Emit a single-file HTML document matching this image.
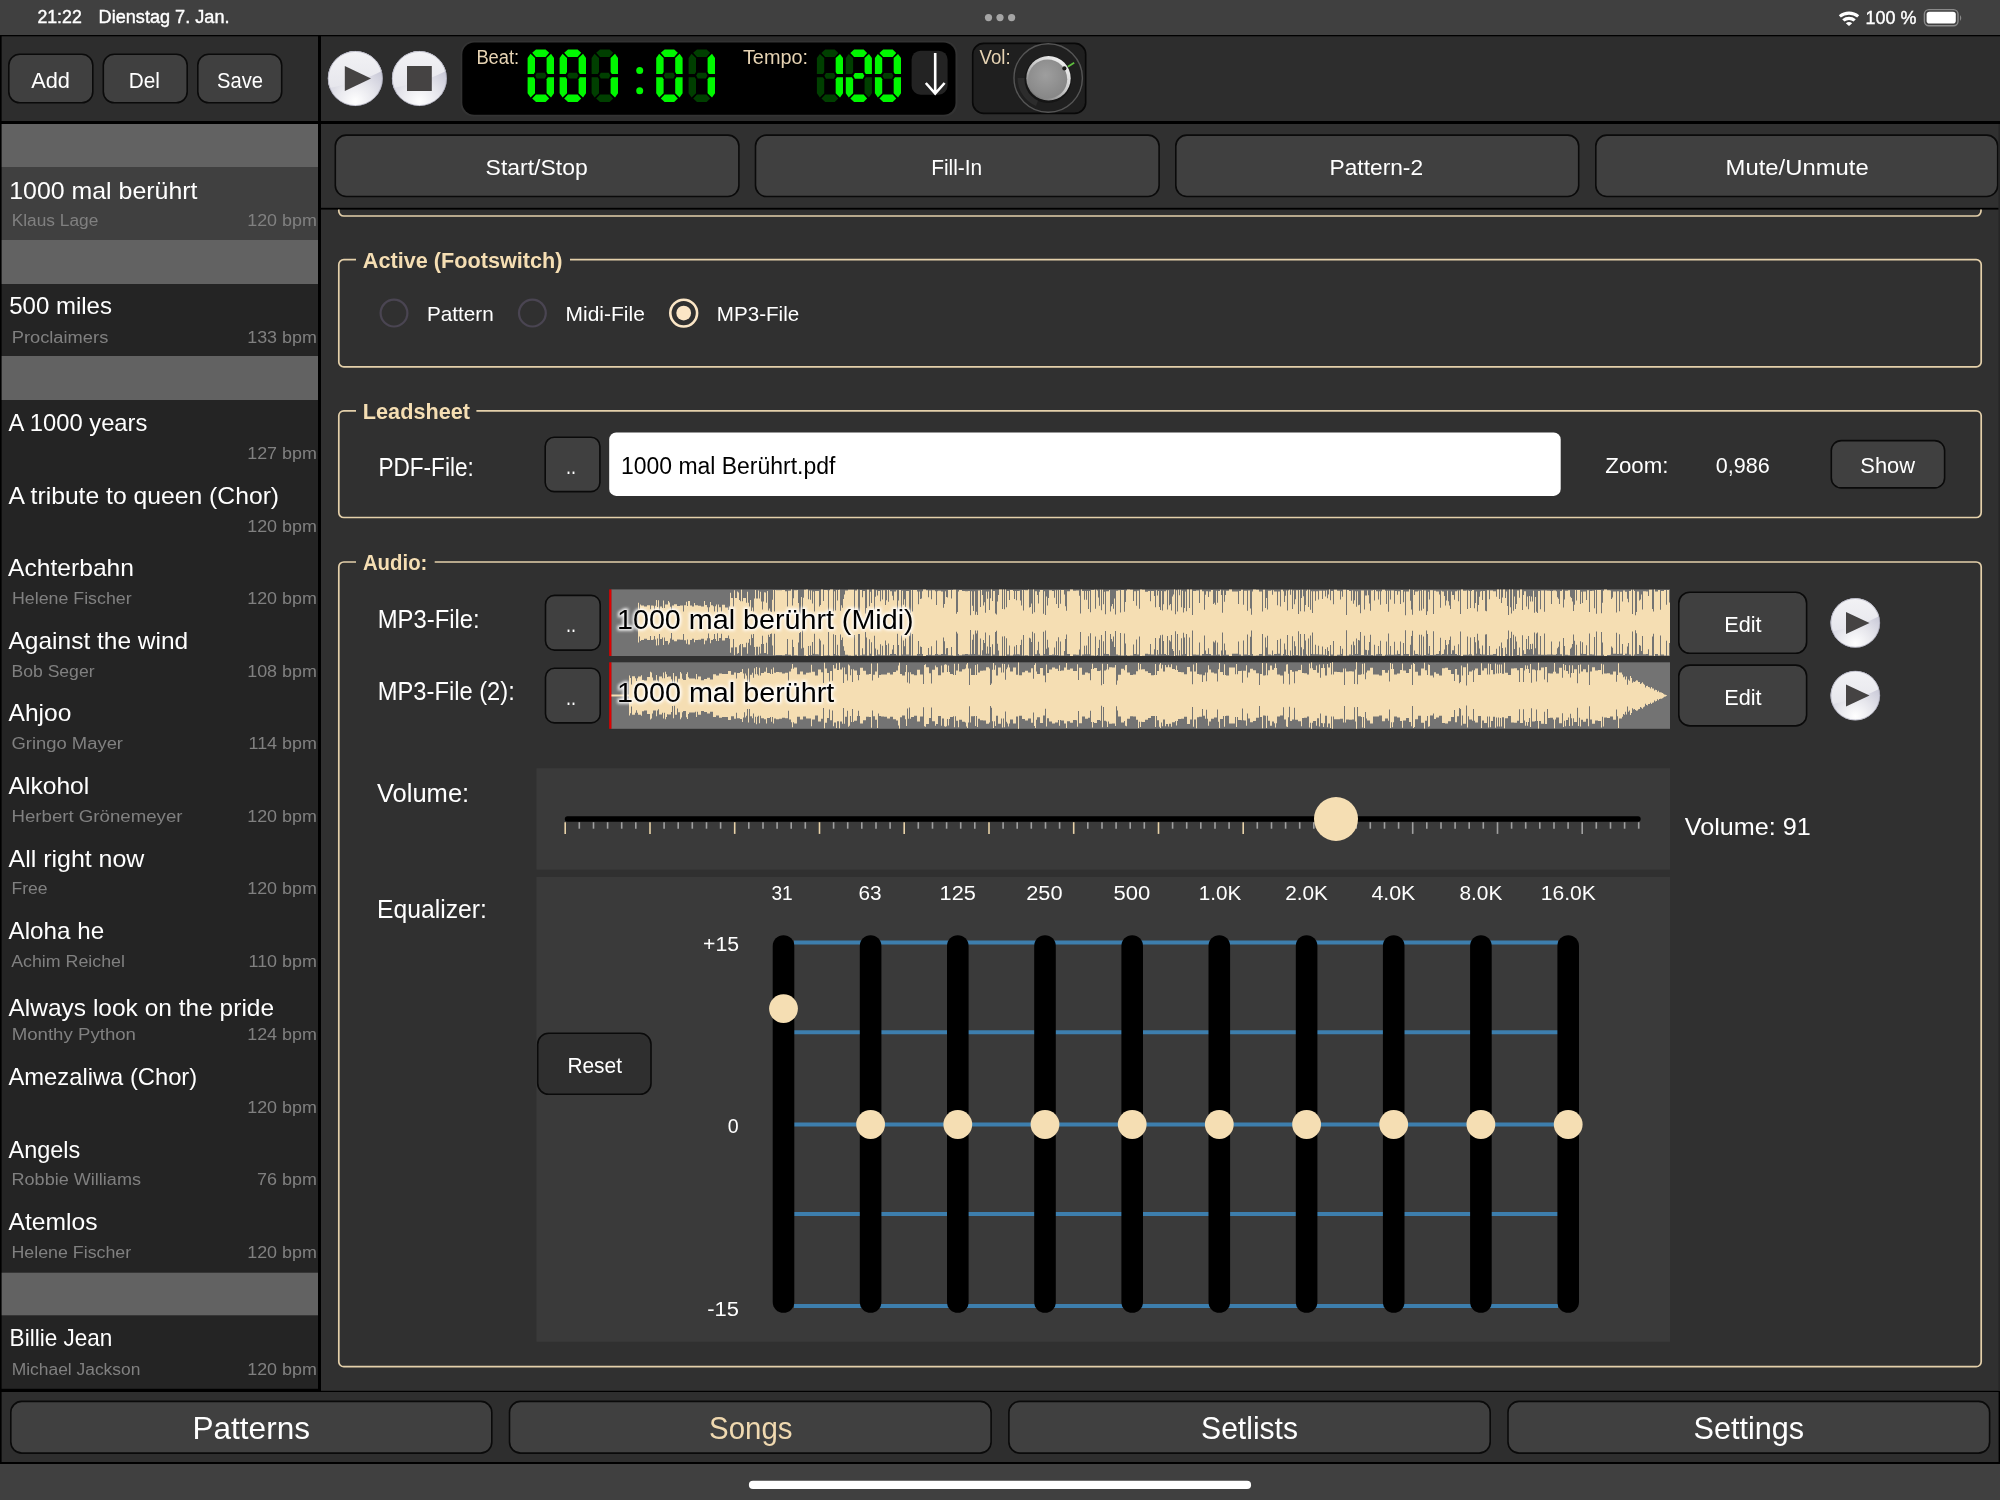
<!DOCTYPE html>
<html><head><meta charset="utf-8"><title>Songs</title>
<style>html,body{margin:0;padding:0;background:#303030;width:2000px;height:1500px;overflow:hidden}
svg{display:block;font-family:"Liberation Sans", sans-serif;opacity:0.999}</style></head>
<body><svg width="2000" height="1500" viewBox="0 0 2000 1500">
<defs>
<radialGradient id="gball" cx="50%" cy="92%" r="80%"><stop offset="0" stop-color="#ffffff"/><stop offset="0.45" stop-color="#e6e6ec"/><stop offset="0.8" stop-color="#cfcfdc"/><stop offset="1" stop-color="#c4c4d2"/></radialGradient>
<linearGradient id="gtop" x1="0" y1="0" x2="0" y2="1"><stop offset="0" stop-color="#f2f2f5"/><stop offset="1" stop-color="#e6e6ec"/></linearGradient>
<radialGradient id="gknob" cx="50%" cy="50%" r="50%" fx="45%" fy="45%"><stop offset="0" stop-color="#9c9c9c"/><stop offset="0.72" stop-color="#8a8a8a"/><stop offset="0.86" stop-color="#d6d6d6"/><stop offset="0.96" stop-color="#a0a0a0"/><stop offset="1" stop-color="#555"/></radialGradient>
<filter id="glow" x="-10%" y="-30%" width="120%" height="160%"><feGaussianBlur stdDeviation="1.6"/></filter>
<linearGradient id="grim" x1="0.85" y1="0.1" x2="0.2" y2="0.9"><stop offset="0" stop-color="#f0f0f0"/><stop offset="0.5" stop-color="#c8c8c8"/><stop offset="1" stop-color="#7a7a7a"/></linearGradient>
<radialGradient id="gface" cx="45%" cy="40%" r="65%"><stop offset="0" stop-color="#9e9e9e"/><stop offset="1" stop-color="#858585"/></radialGradient>
</defs>
<rect x="0.00" y="0.00" width="2000.00" height="35.00" fill="#404040"/>
<rect x="0.00" y="35.00" width="2000.00" height="1.60" fill="#000"/>
<rect x="0.00" y="36.50" width="2000.00" height="84.50" fill="#2d2d2d"/>
<rect x="0.00" y="121.00" width="2000.00" height="3.00" fill="#000"/>
<rect x="0.00" y="124.00" width="318.00" height="1267.00" fill="#242424"/>
<rect x="321.00" y="124.00" width="1679.00" height="1267.00" fill="#303030"/>
<rect x="318.00" y="36.00" width="3.00" height="1355.00" fill="#000"/>
<rect x="0.00" y="1392.00" width="2000.00" height="70.00" fill="#2e2e2e"/>
<rect x="0.00" y="1462.00" width="2000.00" height="2.20" fill="#000"/>
<rect x="0.00" y="1464.00" width="2000.00" height="36.00" fill="#404040"/>
<rect x="321.00" y="124.00" width="1679.00" height="84.00" fill="#303030"/>
<rect x="321.00" y="207.80" width="1679.00" height="1.80" fill="#000"/>
<text x="37.4" y="23.4" font-size="18" fill="#fff" textLength="44.4" lengthAdjust="spacingAndGlyphs" stroke="#fff" stroke-width="0.4">21:22</text>
<text x="98.6" y="23.4" font-size="18" fill="#fff" textLength="130.9" lengthAdjust="spacingAndGlyphs" stroke="#fff" stroke-width="0.4">Dienstag 7. Jan.</text>
<circle cx="988.50" cy="17.60" r="3.60" fill="#a5a5a5"/>
<circle cx="1000.00" cy="17.60" r="3.60" fill="#a5a5a5"/>
<circle cx="1011.60" cy="17.60" r="3.60" fill="#a5a5a5"/>
<g fill="#fff"><path d="M1838.8,15.2 A16,16 0 0 1 1859.2,15.2 L1857.2,17.6 A13,13 0 0 0 1840.8,17.6 Z"/><path d="M1842.2,19.2 A11,11 0 0 1 1855.8,19.2 L1853.6,21.6 A8,8 0 0 0 1844.4,21.6 Z"/><path d="M1845.8,23.2 A5.5,5.5 0 0 1 1852.2,23.2 L1849,26 Z"/></g>
<text x="1865.6" y="23.6" font-size="17.5" fill="#fff" textLength="50.8" lengthAdjust="spacingAndGlyphs" stroke="#fff" stroke-width="0.4">100 %</text>
<rect x="1924.40" y="9.60" width="33.60" height="16.20" fill="none" rx="4.5" stroke="#8a8a8a" stroke-width="1.4"/>
<rect x="1926.60" y="11.80" width="29.20" height="11.80" fill="#fff" rx="2.8"/>
<path d="M1960,15 Q1962.5,18 1960,21 Z" fill="#8a8a8a"/>
<rect x="8.80" y="54.30" width="84.00" height="48.50" fill="#404040" rx="11" stroke="#0a0a0a" stroke-width="1.6"/>
<text x="31.2" y="87.5" font-size="22.5" fill="#fff" textLength="38.8" lengthAdjust="spacingAndGlyphs">Add</text>
<rect x="103.30" y="54.30" width="83.90" height="48.50" fill="#404040" rx="11" stroke="#0a0a0a" stroke-width="1.6"/>
<text x="128.8" y="87.5" font-size="22.5" fill="#fff" textLength="31.2" lengthAdjust="spacingAndGlyphs">Del</text>
<rect x="197.80" y="54.30" width="83.90" height="48.50" fill="#404040" rx="11" stroke="#0a0a0a" stroke-width="1.6"/>
<text x="217.0" y="87.5" font-size="22.5" fill="#fff" textLength="46.0" lengthAdjust="spacingAndGlyphs">Save</text>
<rect x="0.00" y="124.00" width="318.00" height="43.00" fill="#626262"/>
<rect x="0.00" y="167.00" width="318.00" height="73.00" fill="#404040"/>
<rect x="0.00" y="240.00" width="318.00" height="44.00" fill="#626262"/>
<rect x="0.00" y="356.00" width="318.00" height="44.00" fill="#626262"/>
<rect x="0.00" y="1272.70" width="318.00" height="42.60" fill="#626262"/>
<text x="9.2" y="198.8" font-size="23.2" fill="#fff" textLength="188.3" lengthAdjust="spacingAndGlyphs">1000 mal berührt</text>
<text x="11.7" y="226.2" font-size="17.3" fill="#808080" textLength="86.6" lengthAdjust="spacingAndGlyphs">Klaus Lage</text>
<text x="247.2" y="226.2" font-size="17.3" fill="#808080" textLength="69.7" lengthAdjust="spacingAndGlyphs">120 bpm</text>
<text x="9.2" y="313.8" font-size="23.2" fill="#fff" textLength="102.8" lengthAdjust="spacingAndGlyphs">500 miles</text>
<text x="11.7" y="342.5" font-size="17.3" fill="#808080" textLength="96.6" lengthAdjust="spacingAndGlyphs">Proclaimers</text>
<text x="247.2" y="342.5" font-size="17.3" fill="#808080" textLength="69.7" lengthAdjust="spacingAndGlyphs">133 bpm</text>
<text x="8.6" y="431.0" font-size="23.2" fill="#fff" textLength="138.8" lengthAdjust="spacingAndGlyphs">A 1000 years</text>
<text x="247.2" y="459.0" font-size="17.3" fill="#808080" textLength="69.7" lengthAdjust="spacingAndGlyphs">127 bpm</text>
<text x="8.6" y="503.7" font-size="23.2" fill="#fff" textLength="270.5" lengthAdjust="spacingAndGlyphs">A tribute to queen (Chor)</text>
<text x="247.2" y="531.5" font-size="17.3" fill="#808080" textLength="69.7" lengthAdjust="spacingAndGlyphs">120 bpm</text>
<text x="8.0" y="576.0" font-size="23.2" fill="#fff" textLength="126.0" lengthAdjust="spacingAndGlyphs">Achterbahn</text>
<text x="12.0" y="604.0" font-size="17.3" fill="#808080" textLength="119.6" lengthAdjust="spacingAndGlyphs">Helene Fischer</text>
<text x="247.2" y="604.0" font-size="17.3" fill="#808080" textLength="69.7" lengthAdjust="spacingAndGlyphs">120 bpm</text>
<text x="8.5" y="648.5" font-size="23.2" fill="#fff" textLength="179.7" lengthAdjust="spacingAndGlyphs">Against the wind</text>
<text x="11.5" y="676.7" font-size="17.3" fill="#808080" textLength="83.0" lengthAdjust="spacingAndGlyphs">Bob Seger</text>
<text x="247.2" y="676.7" font-size="17.3" fill="#808080" textLength="69.7" lengthAdjust="spacingAndGlyphs">108 bpm</text>
<text x="8.5" y="721.2" font-size="23.2" fill="#fff" textLength="62.8" lengthAdjust="spacingAndGlyphs">Ahjoo</text>
<text x="11.5" y="748.6" font-size="17.3" fill="#808080" textLength="111.5" lengthAdjust="spacingAndGlyphs">Gringo Mayer</text>
<text x="248.5" y="748.6" font-size="17.3" fill="#808080" textLength="68.4" lengthAdjust="spacingAndGlyphs">114 bpm</text>
<text x="8.5" y="793.8" font-size="23.2" fill="#fff" textLength="80.8" lengthAdjust="spacingAndGlyphs">Alkohol</text>
<text x="11.5" y="822.0" font-size="17.3" fill="#808080" textLength="171.0" lengthAdjust="spacingAndGlyphs">Herbert Grönemeyer</text>
<text x="247.2" y="822.0" font-size="17.3" fill="#808080" textLength="69.7" lengthAdjust="spacingAndGlyphs">120 bpm</text>
<text x="8.5" y="866.6" font-size="23.2" fill="#fff" textLength="135.9" lengthAdjust="spacingAndGlyphs">All right now</text>
<text x="11.5" y="894.2" font-size="17.3" fill="#808080" textLength="36.1" lengthAdjust="spacingAndGlyphs">Free</text>
<text x="247.2" y="894.2" font-size="17.3" fill="#808080" textLength="69.7" lengthAdjust="spacingAndGlyphs">120 bpm</text>
<text x="8.5" y="939.2" font-size="23.2" fill="#fff" textLength="95.7" lengthAdjust="spacingAndGlyphs">Aloha he</text>
<text x="11.2" y="967.1" font-size="17.3" fill="#808080" textLength="113.7" lengthAdjust="spacingAndGlyphs">Achim Reichel</text>
<text x="248.5" y="967.1" font-size="17.3" fill="#808080" textLength="68.4" lengthAdjust="spacingAndGlyphs">110 bpm</text>
<text x="8.5" y="1015.5" font-size="23.2" fill="#fff" textLength="265.6" lengthAdjust="spacingAndGlyphs">Always look on the pride</text>
<text x="11.7" y="1039.5" font-size="17.3" fill="#808080" textLength="124.3" lengthAdjust="spacingAndGlyphs">Monthy Python</text>
<text x="247.2" y="1039.5" font-size="17.3" fill="#808080" textLength="69.7" lengthAdjust="spacingAndGlyphs">124 bpm</text>
<text x="8.5" y="1085.0" font-size="23.2" fill="#fff" textLength="188.7" lengthAdjust="spacingAndGlyphs">Amezaliwa (Chor)</text>
<text x="247.2" y="1112.7" font-size="17.3" fill="#808080" textLength="69.7" lengthAdjust="spacingAndGlyphs">120 bpm</text>
<text x="8.5" y="1157.7" font-size="23.2" fill="#fff" textLength="71.8" lengthAdjust="spacingAndGlyphs">Angels</text>
<text x="11.5" y="1185.4" font-size="17.3" fill="#808080" textLength="129.5" lengthAdjust="spacingAndGlyphs">Robbie Williams</text>
<text x="257.1" y="1185.4" font-size="17.3" fill="#808080" textLength="59.8" lengthAdjust="spacingAndGlyphs">76 bpm</text>
<text x="8.5" y="1229.7" font-size="23.2" fill="#fff" textLength="89.0" lengthAdjust="spacingAndGlyphs">Atemlos</text>
<text x="11.5" y="1257.7" font-size="17.3" fill="#808080" textLength="119.7" lengthAdjust="spacingAndGlyphs">Helene Fischer</text>
<text x="247.2" y="1257.7" font-size="17.3" fill="#808080" textLength="69.7" lengthAdjust="spacingAndGlyphs">120 bpm</text>
<text x="9.6" y="1346.4" font-size="23.2" fill="#fff" textLength="102.8" lengthAdjust="spacingAndGlyphs">Billie Jean</text>
<text x="11.7" y="1374.5" font-size="17.3" fill="#808080" textLength="128.7" lengthAdjust="spacingAndGlyphs">Michael Jackson</text>
<text x="247.2" y="1374.5" font-size="17.3" fill="#808080" textLength="69.7" lengthAdjust="spacingAndGlyphs">120 bpm</text>
<rect x="0.00" y="36.00" width="1.60" height="1428.00" fill="#000"/>
<rect x="0.00" y="1388.80" width="321.00" height="3.20" fill="#000"/>
<rect x="321.00" y="1390.80" width="1679.00" height="1.20" fill="#000"/>
<circle cx="355.30" cy="78.50" r="27.40" fill="url(#gball)"/>
<path d="M329.63,88.09 A27.4,27.4 0 1 1 381.68,71.10 Q363.52,81.24 329.63,88.09 Z" fill="url(#gtop)"/>
<circle cx="355.30" cy="78.50" r="27.10" fill="none" stroke="#a8a8b8" stroke-width="0.7"/>
<circle cx="419.40" cy="78.50" r="27.40" fill="url(#gball)"/>
<path d="M393.73,88.09 A27.4,27.4 0 1 1 445.78,71.10 Q427.62,81.24 393.73,88.09 Z" fill="url(#gtop)"/>
<circle cx="419.40" cy="78.50" r="27.10" fill="none" stroke="#a8a8b8" stroke-width="0.7"/>
<path d="M344.8,66 L371,78.5 L344.8,91.1 Z" fill="#454343"/>
<rect x="407.00" y="66.00" width="24.80" height="25.00" fill="#454343"/>
<rect x="460.50" y="41.00" width="497.00" height="75.50" fill="#333333" rx="13"/>
<rect x="462.30" y="42.50" width="493.20" height="72.20" fill="#000" rx="12"/>
<text x="476.4" y="63.9" font-size="19.5" fill="#e6d3b3" textLength="42.8" lengthAdjust="spacingAndGlyphs">Beat:</text>
<text x="742.9" y="63.8" font-size="19.5" fill="#e6d3b3" textLength="65.2" lengthAdjust="spacingAndGlyphs">Tempo:</text>
<polygon points="536.00,49.40 545.60,49.40 549.20,52.80 545.60,57.00 536.00,57.00 532.20,52.80" fill="#00f800"/>
<polygon points="530.60,53.80 535.00,58.00 535.00,72.00 533.80,74.00 527.60,74.00 527.60,58.00" fill="#00f800"/>
<polygon points="527.60,77.20 533.80,77.20 535.00,79.20 535.00,93.20 530.60,97.40 527.60,93.20" fill="#00f800"/>
<polygon points="551.00,53.80 554.00,58.00 554.00,74.00 547.80,74.00 546.60,72.00 546.60,58.00" fill="#00f800"/>
<polygon points="554.00,77.20 547.80,77.20 546.60,79.20 546.60,93.20 551.00,97.40 554.00,93.20" fill="#00f800"/>
<polygon points="536.00,94.40 545.60,94.40 549.20,98.40 545.60,102.00 536.00,102.00 532.20,98.40" fill="#00f800"/>
<polygon points="535.20,75.60 536.80,72.80 544.80,72.80 546.40,75.60 544.80,78.60 536.80,78.60" fill="#003f00"/>
<polygon points="568.00,49.40 577.60,49.40 581.20,52.80 577.60,57.00 568.00,57.00 564.20,52.80" fill="#00f800"/>
<polygon points="562.60,53.80 567.00,58.00 567.00,72.00 565.80,74.00 559.60,74.00 559.60,58.00" fill="#00f800"/>
<polygon points="559.60,77.20 565.80,77.20 567.00,79.20 567.00,93.20 562.60,97.40 559.60,93.20" fill="#00f800"/>
<polygon points="583.00,53.80 586.00,58.00 586.00,74.00 579.80,74.00 578.60,72.00 578.60,58.00" fill="#00f800"/>
<polygon points="586.00,77.20 579.80,77.20 578.60,79.20 578.60,93.20 583.00,97.40 586.00,93.20" fill="#00f800"/>
<polygon points="568.00,94.40 577.60,94.40 581.20,98.40 577.60,102.00 568.00,102.00 564.20,98.40" fill="#00f800"/>
<polygon points="567.20,75.60 568.80,72.80 576.80,72.80 578.40,75.60 576.80,78.60 568.80,78.60" fill="#003f00"/>
<polygon points="600.00,49.40 609.60,49.40 613.20,52.80 609.60,57.00 600.00,57.00 596.20,52.80" fill="#003f00"/>
<polygon points="594.60,53.80 599.00,58.00 599.00,72.00 597.80,74.00 591.60,74.00 591.60,58.00" fill="#003f00"/>
<polygon points="591.60,77.20 597.80,77.20 599.00,79.20 599.00,93.20 594.60,97.40 591.60,93.20" fill="#003f00"/>
<polygon points="615.00,53.80 618.00,58.00 618.00,74.00 611.80,74.00 610.60,72.00 610.60,58.00" fill="#00f800"/>
<polygon points="618.00,77.20 611.80,77.20 610.60,79.20 610.60,93.20 615.00,97.40 618.00,93.20" fill="#00f800"/>
<polygon points="600.00,94.40 609.60,94.40 613.20,98.40 609.60,102.00 600.00,102.00 596.20,98.40" fill="#003f00"/>
<polygon points="599.20,75.60 600.80,72.80 608.80,72.80 610.40,75.60 608.80,78.60 600.80,78.60" fill="#003f00"/>
<polygon points="664.60,49.40 674.20,49.40 677.80,52.80 674.20,57.00 664.60,57.00 660.80,52.80" fill="#00f800"/>
<polygon points="659.20,53.80 663.60,58.00 663.60,72.00 662.40,74.00 656.20,74.00 656.20,58.00" fill="#00f800"/>
<polygon points="656.20,77.20 662.40,77.20 663.60,79.20 663.60,93.20 659.20,97.40 656.20,93.20" fill="#00f800"/>
<polygon points="679.60,53.80 682.60,58.00 682.60,74.00 676.40,74.00 675.20,72.00 675.20,58.00" fill="#00f800"/>
<polygon points="682.60,77.20 676.40,77.20 675.20,79.20 675.20,93.20 679.60,97.40 682.60,93.20" fill="#00f800"/>
<polygon points="664.60,94.40 674.20,94.40 677.80,98.40 674.20,102.00 664.60,102.00 660.80,98.40" fill="#00f800"/>
<polygon points="663.80,75.60 665.40,72.80 673.40,72.80 675.00,75.60 673.40,78.60 665.40,78.60" fill="#003f00"/>
<polygon points="697.00,49.40 706.60,49.40 710.20,52.80 706.60,57.00 697.00,57.00 693.20,52.80" fill="#003f00"/>
<polygon points="691.60,53.80 696.00,58.00 696.00,72.00 694.80,74.00 688.60,74.00 688.60,58.00" fill="#003f00"/>
<polygon points="688.60,77.20 694.80,77.20 696.00,79.20 696.00,93.20 691.60,97.40 688.60,93.20" fill="#003f00"/>
<polygon points="712.00,53.80 715.00,58.00 715.00,74.00 708.80,74.00 707.60,72.00 707.60,58.00" fill="#00f800"/>
<polygon points="715.00,77.20 708.80,77.20 707.60,79.20 707.60,93.20 712.00,97.40 715.00,93.20" fill="#00f800"/>
<polygon points="697.00,94.40 706.60,94.40 710.20,98.40 706.60,102.00 697.00,102.00 693.20,98.40" fill="#003f00"/>
<polygon points="696.20,75.60 697.80,72.80 705.80,72.80 707.40,75.60 705.80,78.60 697.80,78.60" fill="#003f00"/>
<circle cx="639.70" cy="70.50" r="3.50" fill="#00f800"/>
<circle cx="639.70" cy="90.70" r="3.50" fill="#00f800"/>
<polygon points="825.20,49.50 834.70,49.50 838.25,52.90 834.70,57.10 825.20,57.10 821.45,52.90" fill="#003f00"/>
<polygon points="819.87,53.90 824.22,58.10 824.22,72.10 823.03,74.10 816.90,74.10 816.90,58.10" fill="#003f00"/>
<polygon points="816.90,77.30 823.03,77.30 824.22,79.30 824.22,93.30 819.87,97.50 816.90,93.30" fill="#003f00"/>
<polygon points="840.03,53.90 843.00,58.10 843.00,74.10 836.87,74.10 835.68,72.10 835.68,58.10" fill="#00f800"/>
<polygon points="843.00,77.30 836.87,77.30 835.68,79.30 835.68,93.30 840.03,97.50 843.00,93.30" fill="#00f800"/>
<polygon points="825.20,94.50 834.70,94.50 838.25,98.50 834.70,102.10 825.20,102.10 821.45,98.50" fill="#003f00"/>
<polygon points="824.41,75.70 826.00,72.90 833.90,72.90 835.49,75.70 833.90,78.70 826.00,78.70" fill="#003f00"/>
<polygon points="854.10,49.50 863.60,49.50 867.15,52.90 863.60,57.10 854.10,57.10 850.35,52.90" fill="#00f800"/>
<polygon points="848.77,53.90 853.12,58.10 853.12,72.10 851.93,74.10 845.80,74.10 845.80,58.10" fill="#003f00"/>
<polygon points="845.80,77.30 851.93,77.30 853.12,79.30 853.12,93.30 848.77,97.50 845.80,93.30" fill="#00f800"/>
<polygon points="868.93,53.90 871.90,58.10 871.90,74.10 865.77,74.10 864.58,72.10 864.58,58.10" fill="#00f800"/>
<polygon points="871.90,77.30 865.77,77.30 864.58,79.30 864.58,93.30 868.93,97.50 871.90,93.30" fill="#003f00"/>
<polygon points="854.10,94.50 863.60,94.50 867.15,98.50 863.60,102.10 854.10,102.10 850.35,98.50" fill="#00f800"/>
<polygon points="853.31,75.70 854.90,72.90 862.80,72.90 864.39,75.70 862.80,78.70 854.90,78.70" fill="#00f800"/>
<polygon points="883.20,49.50 892.70,49.50 896.25,52.90 892.70,57.10 883.20,57.10 879.45,52.90" fill="#00f800"/>
<polygon points="877.87,53.90 882.22,58.10 882.22,72.10 881.03,74.10 874.90,74.10 874.90,58.10" fill="#00f800"/>
<polygon points="874.90,77.30 881.03,77.30 882.22,79.30 882.22,93.30 877.87,97.50 874.90,93.30" fill="#00f800"/>
<polygon points="898.03,53.90 901.00,58.10 901.00,74.10 894.87,74.10 893.68,72.10 893.68,58.10" fill="#00f800"/>
<polygon points="901.00,77.30 894.87,77.30 893.68,79.30 893.68,93.30 898.03,97.50 901.00,93.30" fill="#00f800"/>
<polygon points="883.20,94.50 892.70,94.50 896.25,98.50 892.70,102.10 883.20,102.10 879.45,98.50" fill="#00f800"/>
<polygon points="882.41,75.70 884.00,72.90 891.90,72.90 893.49,75.70 891.90,78.70 884.00,78.70" fill="#003f00"/>
<rect x="911.60" y="50.70" width="36.00" height="44.00" fill="#232323" rx="9"/>
<path d="M935.2,53 V93.5 M925.8,83 L935.2,93.5 L944.6,83" stroke="#fff" stroke-width="2.6" fill="none"/>
<rect x="972.70" y="43.40" width="113.00" height="70.00" fill="#1f1f1f" rx="11" stroke="#080808" stroke-width="1.6"/>
<text x="979.6" y="64.0" font-size="19.5" fill="#e6d3b3" textLength="31.1" lengthAdjust="spacingAndGlyphs">Vol:</text>
<circle cx="1048.20" cy="78.00" r="34.20" fill="none" stroke="#555" stroke-width="1.4"/>
<path d="M1017.5,78 A30.5,30.5 0 0 0 1036,106 L1039,98 A22,22 0 0 1 1026,78 Z" fill="#2c2c2c"/>
<circle cx="1048.00" cy="79.50" r="23.50" fill="#151515"/>
<circle cx="1048.50" cy="78.30" r="22.20" fill="url(#grim)"/>
<circle cx="1047.60" cy="79.20" r="19.60" fill="url(#gface)"/>
<line x1="1067.8" y1="66.8" x2="1074.2" y2="62.8" stroke="#5fbf3f" stroke-width="1.8"/>
<circle cx="1064.40" cy="68.40" r="2.10" fill="#1a1a1a"/>
<rect x="335.30" y="135.10" width="403.60" height="61.40" fill="#404040" rx="11" stroke="#0a0a0a" stroke-width="1.6"/>
<text x="485.6" y="175.0" font-size="22.5" fill="#fff" textLength="102.1" lengthAdjust="spacingAndGlyphs">Start/Stop</text>
<rect x="755.50" y="135.10" width="403.60" height="61.40" fill="#404040" rx="11" stroke="#0a0a0a" stroke-width="1.6"/>
<text x="931.2" y="175.0" font-size="22.5" fill="#fff" textLength="51.0" lengthAdjust="spacingAndGlyphs">Fill-In</text>
<rect x="1175.80" y="135.10" width="402.90" height="61.40" fill="#404040" rx="11" stroke="#0a0a0a" stroke-width="1.6"/>
<text x="1329.5" y="175.0" font-size="22.5" fill="#fff" textLength="93.6" lengthAdjust="spacingAndGlyphs">Pattern-2</text>
<rect x="1595.80" y="135.10" width="401.90" height="61.40" fill="#404040" rx="11" stroke="#0a0a0a" stroke-width="1.6"/>
<text x="1725.6" y="175.0" font-size="22.5" fill="#fff" textLength="143.1" lengthAdjust="spacingAndGlyphs">Mute/Unmute</text>
<path d="M338.8,209.6 V211 A5,5 0 0 0 343.8,216 H1976 A5,5 0 0 0 1981,211 V209.6" fill="none" stroke="#e4d0aa" stroke-width="1.7"/>
<path d="M570,259.6 H1976.2 A5,5 0 0 1 1981.2,264.6 V361.9 A5,5 0 0 1 1976.2,366.9 H343.8 A5,5 0 0 1 338.8,361.9 V264.6 A5,5 0 0 1 343.8,259.6 H356" fill="none" stroke="#e4d0aa" stroke-width="1.7"/>
<text x="362.8" y="267.8" font-size="22.5" fill="#f5deb3" font-weight="700" textLength="199.7" lengthAdjust="spacingAndGlyphs">Active (Footswitch)</text>
<path d="M476.4,410.8 H1976.2 A5,5 0 0 1 1981.2,415.8 V512.5 A5,5 0 0 1 1976.2,517.5 H343.8 A5,5 0 0 1 338.8,512.5 V415.8 A5,5 0 0 1 343.8,410.8 H356" fill="none" stroke="#e4d0aa" stroke-width="1.7"/>
<text x="362.8" y="418.8" font-size="22.5" fill="#f5deb3" font-weight="700" textLength="107.2" lengthAdjust="spacingAndGlyphs">Leadsheet</text>
<path d="M434.7,562 H1976.2 A5,5 0 0 1 1981.2,567 V1361.7 A5,5 0 0 1 1976.2,1366.7 H343.8 A5,5 0 0 1 338.8,1361.7 V567 A5,5 0 0 1 343.8,562 H356" fill="none" stroke="#e4d0aa" stroke-width="1.7"/>
<text x="362.9" y="569.8" font-size="22.5" fill="#f5deb3" font-weight="700" textLength="64.5" lengthAdjust="spacingAndGlyphs">Audio:</text>
<circle cx="394.00" cy="313.10" r="13.40" fill="none" stroke="#4a4552" stroke-width="2.2"/>
<text x="426.9" y="321.0" font-size="21" fill="#fff" textLength="66.8" lengthAdjust="spacingAndGlyphs">Pattern</text>
<circle cx="532.40" cy="313.10" r="13.40" fill="none" stroke="#4a4552" stroke-width="2.2"/>
<text x="565.6" y="321.0" font-size="21" fill="#fff" textLength="79.2" lengthAdjust="spacingAndGlyphs">Midi-File</text>
<circle cx="683.70" cy="313.10" r="13.40" fill="none" stroke="#fbe6c6" stroke-width="2.6"/>
<circle cx="683.70" cy="313.10" r="7.40" fill="#fbe6c6"/>
<text x="716.8" y="321.0" font-size="21" fill="#fff" textLength="82.4" lengthAdjust="spacingAndGlyphs">MP3-File</text>
<text x="378.4" y="476.2" font-size="25" fill="#fff" textLength="95.4" lengthAdjust="spacingAndGlyphs">PDF-File:</text>
<rect x="545.20" y="437.20" width="54.70" height="54.40" fill="#404040" rx="9" stroke="#0a0a0a" stroke-width="1.6"/>
<text x="566.0" y="474.0" font-size="22" fill="#fff" textLength="10.0" lengthAdjust="spacingAndGlyphs">..</text>
<rect x="609.20" y="432.40" width="951.50" height="63.50" fill="#fff" rx="7"/>
<text x="621.0" y="473.7" font-size="23" fill="#000" textLength="214.3" lengthAdjust="spacingAndGlyphs">1000 mal Berührt.pdf</text>
<text x="1605.3" y="473.0" font-size="22" fill="#fff" textLength="63.1" lengthAdjust="spacingAndGlyphs">Zoom:</text>
<text x="1715.7" y="473.0" font-size="22" fill="#fff" textLength="54.0" lengthAdjust="spacingAndGlyphs">0,986</text>
<rect x="1831.30" y="440.60" width="113.30" height="47.30" fill="#404040" rx="10" stroke="#0a0a0a" stroke-width="1.6"/>
<text x="1860.3" y="473.4" font-size="22" fill="#fff" textLength="54.7" lengthAdjust="spacingAndGlyphs">Show</text>
<text x="377.8" y="627.6" font-size="25" fill="#fff" textLength="101.8" lengthAdjust="spacingAndGlyphs">MP3-File:</text>
<text x="377.8" y="699.7" font-size="25" fill="#fff" textLength="137.0" lengthAdjust="spacingAndGlyphs">MP3-File (2):</text>
<rect x="545.50" y="595.40" width="54.70" height="54.70" fill="#404040" rx="9" stroke="#0a0a0a" stroke-width="1.6"/>
<text x="566.0" y="632.0" font-size="22" fill="#fff" textLength="10.0" lengthAdjust="spacingAndGlyphs">..</text>
<rect x="545.50" y="668.20" width="54.70" height="54.70" fill="#404040" rx="9" stroke="#0a0a0a" stroke-width="1.6"/>
<text x="566.0" y="705.0" font-size="22" fill="#fff" textLength="10.0" lengthAdjust="spacingAndGlyphs">..</text>
<rect x="611.20" y="589.40" width="1058.80" height="66.60" fill="#737373"/>
<path d="M611,622.7V622.7h1V622.7h1V622.7h1V622.7h1V622.7h1V622.7h1V622.7h1V622.7h1V622.7h1V622.7h1V622.7h1V622.7h1V622.7h1V622.7h1V622.7h1V622.7h1V622.7h1V622.7h1V622.7h1V622.7h1V622.7h1V622.7h1V622.7h1V622.7h1V622.7h1V622.7h1V622.7h1V602.8h1V608.9h1V604.5h1V605.5h1V605.5h1V605.5h1V606.6h1V606.6h1V606.6h1V605.3h1V605.3h1V605.3h1V609.3h1V605.4h1V605.4h1V605.8h1V609.4h1V605.8h1V600.0h1V606.9h1V600.2h1V611.5h1V606.4h1V606.4h1V607.9h1V600.5h1V607.9h1V604.5h1V604.5h1V604.5h1V601.0h1V602.6h1V606.8h1V612.5h1V605.6h1V605.6h1V604.2h1V604.2h1V604.2h1V606.0h1V606.0h1V606.0h1V605.6h1V605.6h1V605.6h1V611.5h1V605.2h1V605.2h1V601.7h1V605.9h1V600.9h1V600.9h1V605.5h1V605.5h1V606.6h1V606.6h1V603.1h1V605.3h1V605.3h1V605.3h1V605.7h1V605.7h1V605.7h1V606.6h1V606.6h1V606.6h1V601.1h1V605.0h1V605.0h1V607.2h1V612.0h1V607.2h1V602.1h1V605.3h1V605.3h1V606.3h1V611.4h1V606.3h1V604.5h1V612.2h1V604.5h1V607.3h1V607.3h1V611.6h1V604.8h1V604.8h1V604.8h1V607.5h1V607.5h1V607.5h1V609.9h1V606.6h1V592.7h1V598.0h1V598.0h1V606.4h1V590.2h1V598.1h1V598.1h1V591.6h1V592.5h1V600.1h1V601.3h1V589.7h1V601.3h1V598.1h1V598.1h1V598.1h1V602.7h1V591.7h1V602.7h1V606.5h1V600.1h1V611.0h1V607.5h1V611.4h1V598.4h1V590.1h1V598.6h1V598.6h1V590.6h1V598.6h1V591.8h1V601.4h1V609.6h1V601.4h1V592.3h1V592.5h1V602.7h1V591.1h1V610.6h1V608.4h1V611.4h1V611.9h1V599.8h1V590.1h1V611.6h1V590.1h1V590.3h1V590.3h1V590.3h1V590.3h1V590.3h1V590.3h1V590.1h1V590.1h1V590.1h1V591.2h1V591.2h1V606.5h1V590.7h1V590.7h1V590.7h1V589.6h1V605.6h1V598.3h1V590.2h1V590.2h1V590.2h1V590.0h1V603.0h1V612.4h1V613.4h1V596.9h1V614.9h1V597.7h1V589.8h1V589.8h1V589.5h1V589.5h1V599.3h1V590.5h1V599.7h1V590.5h1V603.5h1V591.6h1V611.6h1V591.1h1V591.1h1V591.1h1V590.9h1V606.6h1V604.9h1V589.5h1V589.5h1V600.9h1V590.0h1V590.0h1V590.0h1V590.2h1V613.4h1V590.2h1V589.6h1V589.6h1V589.6h1V611.2h1V591.3h1V610.5h1V590.1h1V600.6h1V590.1h1V589.7h1V610.8h1V605.3h1V607.8h1V599.1h1V594.6h1V590.6h1V590.6h1V590.6h1V589.8h1V589.8h1V589.8h1V589.7h1V589.7h1V589.7h1V610.4h1V590.6h1V590.6h1V589.5h1V611.4h1V611.4h1V590.1h1V590.1h1V597.2h1V591.0h1V591.0h1V613.4h1V607.9h1V589.8h1V589.8h1V606.2h1V591.7h1V603.1h1V589.5h1V589.5h1V609.6h1V596.8h1V590.2h1V595.6h1V590.9h1V590.9h1V601.2h1V590.2h1V599.6h1V590.2h1V590.2h1V605.0h1V600.3h1V590.1h1V601.8h1V590.1h1V591.3h1V591.3h1V595.8h1V600.3h1V591.4h1V591.4h1V590.2h1V611.7h1V600.4h1V590.0h1V590.0h1V609.8h1V590.8h1V604.8h1V599.2h1V606.9h1V590.9h1V590.9h1V590.9h1V609.7h1V613.0h1V589.9h1V611.4h1V589.9h1V590.0h1V590.0h1V590.0h1V591.4h1V604.3h1V591.4h1V599.0h1V598.5h1V591.3h1V589.5h1V589.5h1V589.5h1V590.3h1V590.3h1V597.3h1V590.6h1V590.6h1V599.2h1V590.2h1V590.2h1V590.2h1V591.3h1V604.9h1V591.3h1V590.7h1V590.7h1V590.7h1V591.4h1V591.4h1V607.8h1V604.1h1V591.2h1V597.1h1V597.4h1V590.1h1V590.1h1V590.1h1V598.5h1V590.1h1V589.7h1V589.7h1V589.7h1V613.7h1V612.0h1V591.5h1V590.1h1V590.1h1V590.1h1V591.0h1V591.0h1V591.0h1V591.3h1V591.3h1V591.3h1V590.9h1V590.9h1V615.3h1V591.2h1V605.7h1V611.0h1V591.3h1V614.8h1V611.8h1V614.9h1V590.6h1V590.6h1V606.9h1V590.1h1V595.1h1V605.4h1V602.3h1V612.8h1V591.6h1V598.8h1V591.6h1V610.1h1V598.3h1V589.6h1V601.1h1V590.9h1V590.9h1V613.5h1V614.6h1V601.6h1V594.9h1V589.6h1V589.6h1V589.6h1V609.0h1V589.6h1V609.2h1V589.5h1V607.2h1V591.0h1V591.0h1V599.9h1V590.0h1V590.0h1V590.0h1V590.9h1V599.0h1V590.9h1V600.3h1V591.1h1V591.1h1V590.8h1V600.5h1V605.6h1V590.0h1V610.4h1V590.0h1V590.2h1V590.2h1V590.2h1V589.6h1V607.6h1V607.0h1V603.4h1V613.7h1V589.5h1V612.2h1V591.2h1V591.2h1V595.1h1V603.6h1V591.7h1V589.9h1V589.9h1V589.9h1V613.7h1V591.3h1V614.9h1V596.6h1V605.6h1V598.0h1V590.3h1V590.3h1V590.3h1V590.9h1V590.9h1V597.8h1V590.3h1V604.1h1V590.3h1V608.1h1V590.0h1V603.8h1V590.0h1V590.0h1V590.0h1V594.5h1V606.3h1V610.8h1V591.3h1V591.3h1V591.3h1V589.4h1V589.4h1V589.4h1V590.8h1V590.8h1V590.8h1V590.6h1V590.6h1V590.6h1V595.8h1V613.4h1V589.6h1V591.0h1V591.0h1V599.7h1V591.1h1V599.8h1V591.1h1V609.1h1V591.1h1V612.2h1V590.0h1V590.0h1V590.0h1V589.7h1V608.8h1V589.7h1V590.5h1V597.5h1V605.7h1V589.7h1V610.3h1V589.7h1V604.2h1V591.7h1V614.3h1V591.3h1V591.3h1V591.3h1V589.9h1V611.5h1V606.3h1V603.9h1V608.8h1V598.5h1V614.5h1V590.8h1V590.8h1V590.2h1V590.2h1V612.5h1V590.0h1V590.0h1V590.0h1V611.8h1V601.9h1V590.4h1V589.6h1V589.6h1V589.6h1V589.8h1V589.8h1V589.8h1V601.0h1V591.3h1V591.3h1V605.8h1V590.8h1V590.8h1V608.8h1V589.5h1V589.5h1V589.7h1V589.7h1V589.7h1V591.7h1V591.7h1V591.7h1V591.1h1V591.1h1V601.3h1V590.9h1V590.9h1V590.9h1V596.1h1V607.3h1V590.2h1V595.4h1V591.0h1V607.1h1V610.1h1V591.1h1V610.6h1V604.3h1V591.3h1V591.3h1V590.3h1V609.5h1V590.3h1V605.2h1V603.9h1V610.4h1V596.4h1V594.5h1V589.5h1V614.2h1V590.2h1V611.4h1V589.8h1V595.2h1V589.8h1V607.2h1V590.8h1V612.6h1V608.0h1V591.4h1V611.3h1V589.5h1V589.5h1V607.9h1V589.5h1V589.5h1V614.9h1V590.9h1V590.9h1V590.9h1V590.6h1V590.6h1V590.6h1V602.9h1V589.8h1V589.8h1V591.3h1V591.3h1V609.8h1V594.8h1V591.3h1V591.3h1V597.1h1V591.5h1V591.5h1V590.1h1V590.1h1V604.0h1V602.8h1V604.8h1V590.7h1V602.8h1V591.0h1V591.0h1V589.7h1V594.9h1V612.8h1V590.6h1V601.8h1V595.1h1V590.7h1V590.7h1V590.7h1V589.4h1V589.4h1V589.4h1V591.6h1V591.6h1V591.6h1V591.6h1V591.6h1V591.6h1V603.9h1V590.9h1V590.9h1V589.7h1V589.7h1V604.8h1V590.8h1V590.8h1V590.8h1V610.8h1V590.4h1V590.4h1V608.6h1V614.8h1V591.4h1V589.6h1V589.6h1V589.6h1V589.8h1V589.8h1V589.8h1V591.4h1V591.4h1V591.4h1V611.4h1V589.7h1V589.7h1V608.0h1V597.9h1V609.6h1V590.8h1V590.8h1V590.8h1V590.2h1V594.8h1V590.2h1V591.5h1V591.5h1V591.5h1V605.3h1V591.6h1V591.6h1V606.6h1V589.8h1V589.8h1V591.3h1V601.9h1V595.8h1V590.5h1V610.5h1V590.5h1V589.7h1V594.8h1V589.7h1V609.1h1V590.5h1V604.2h1V599.2h1V590.3h1V590.3h1V614.1h1V590.0h1V611.3h1V598.1h1V589.7h1V596.2h1V611.5h1V604.9h1V590.8h1V589.7h1V607.0h1V589.7h1V609.8h1V591.3h1V613.0h1V591.2h1V591.2h1V600.7h1V591.2h1V591.2h1V599.6h1V590.8h1V590.8h1V590.8h1V598.9h1V590.7h1V590.7h1V596.5h1V590.4h1V598.2h1V594.5h1V589.4h1V600.3h1V590.9h1V590.9h1V604.3h1V589.7h1V589.7h1V589.7h1V590.7h1V590.7h1V590.7h1V599.4h1V591.3h1V596.7h1V589.7h1V589.7h1V589.7h1V615.1h1V590.0h1V590.0h1V590.9h1V590.9h1V600.7h1V590.4h1V603.8h1V600.2h1V591.3h1V606.8h1V591.3h1V605.3h1V604.8h1V613.3h1V590.5h1V590.5h1V590.5h1V609.6h1V595.6h1V595.5h1V590.6h1V595.2h1V603.4h1V610.7h1V590.5h1V590.5h1V590.0h1V600.6h1V590.0h1V591.2h1V591.2h1V599.4h1V591.3h1V604.7h1V591.3h1V589.7h1V589.7h1V589.7h1V590.7h1V604.0h1V590.7h1V611.8h1V590.8h1V599.5h1V590.6h1V590.6h1V590.6h1V603.7h1V590.9h1V590.9h1V594.8h1V591.3h1V591.3h1V604.0h1V590.0h1V590.0h1V602.3h1V591.4h1V615.2h1V591.5h1V591.5h1V591.5h1V589.4h1V600.7h1V609.5h1V614.7h1V590.1h1V595.0h1V591.5h1V591.5h1V591.5h1V590.7h1V610.7h1V590.7h1V610.6h1V589.9h1V608.8h1V590.4h1V590.4h1V614.9h1V611.3h1V591.7h1V599.4h1V590.3h1V590.3h1V590.3h1V614.1h1V590.7h1V590.7h1V591.5h1V591.5h1V591.5h1V594.4h1V607.7h1V590.7h1V591.4h1V591.4h1V596.0h1V605.4h1V600.5h1V590.8h1V601.2h1V605.5h1V609.0h1V591.4h1V595.1h1V595.1h1V599.7h1V591.3h1V591.3h1V590.5h1V601.2h1V590.5h1V613.9h1V589.5h1V589.5h1V590.7h1V590.7h1V590.7h1V590.6h1V609.0h1V590.6h1V591.1h1V607.9h1V591.1h1V590.0h1V590.0h1V608.3h1V603.1h1V591.6h1V611.6h1V604.9h1V596.8h1V591.5h1V590.9h1V600.0h1V590.9h1V590.9h1V610.8h1V611.2h1V590.3h1V590.3h1V599.3h1V590.6h1V590.6h1V590.6h1V591.3h1V591.3h1V591.3h1V596.7h1V589.6h1V589.6h1V599.1h1V589.4h1V602.9h1V597.4h1V589.5h1V589.5h1V598.0h1V591.4h1V606.1h1V615.0h1V589.6h1V607.3h1V613.6h1V589.5h1V610.7h1V596.5h1V609.0h1V604.0h1V590.4h1V590.4h1V597.8h1V589.6h1V589.6h1V610.1h1V595.1h1V591.3h1V591.3h1V606.4h1V596.4h1V609.3h1V596.0h1V601.4h1V596.5h1V601.6h1V590.8h1V612.8h1V597.1h1V611.8h1V613.0h1V591.0h1V591.0h1V609.3h1V590.6h1V590.6h1V590.6h1V611.8h1V590.6h1V590.6h1V590.8h1V590.8h1V590.8h1V590.9h1V603.9h1V590.9h1V590.6h1V590.6h1V590.6h1V591.3h1V597.2h1V598.7h1V604.0h1V591.1h1V591.1h1V589.7h1V607.4h1V599.5h1V590.7h1V590.7h1V590.7h1V590.2h1V590.2h1V596.7h1V598.0h1V601.5h1V611.0h1V604.7h1V590.1h1V600.6h1V590.0h1V590.0h1V590.0h1V604.1h1V591.7h1V603.1h1V591.4h1V591.4h1V591.4h1V600.1h1V590.2h1V590.2h1V611.9h1V591.1h1V591.1h1V590.8h1V590.8h1V608.3h1V589.9h1V613.8h1V589.9h1V590.0h1V590.0h1V590.0h1V613.3h1V602.8h1V590.7h1V589.5h1V589.5h1V589.5h1V590.3h1V590.3h1V590.3h1V590.6h1V598.9h1V597.6h1V591.6h1V591.6h1V591.6h1V612.6h1V591.3h1V591.3h1V611.2h1V591.7h1V591.7h1V601.5h1V590.4h1V590.4h1V591.7h1V591.7h1V598.8h1V602.3h1V591.0h1V591.0h1V589.7h1V614.0h1V589.7h1V590.9h1V615.2h1V612.1h1V591.5h1V591.5h1V600.5h1V599.6h1V594.5h1V609.4h1V591.2h1V591.2h1V591.2h1V591.4h1V591.4h1V596.1h1V589.8h1V589.8h1V589.8h1V609.0h1V611.6h1V589.5h1V591.5h1V591.5h1V591.5h1V590.0h1V590.0h1V609.8h1V590.9h1V590.9h1V590.9h1V590.0h1V590.0h1V604.7h1V590.0h1V590.0h1V602.5h1V622.7V642.9h-1V655.4h-1V655.4h-1V640.7h-1V655.4h-1V655.4h-1V654.5h-1V654.5h-1V654.5h-1V635.6h-1V655.4h-1V655.4h-1V653.9h-1V653.9h-1V653.9h-1V655.9h-1V633.8h-1V636.4h-1V655.6h-1V655.6h-1V655.6h-1V649.3h-1V654.0h-1V654.0h-1V654.2h-1V654.2h-1V654.2h-1V636.0h-1V650.9h-1V645.8h-1V644.9h-1V653.9h-1V653.9h-1V633.3h-1V630.2h-1V654.5h-1V655.7h-1V631.4h-1V655.7h-1V654.4h-1V654.4h-1V643.1h-1V646.6h-1V653.7h-1V653.7h-1V655.0h-1V655.0h-1V643.9h-1V653.7h-1V653.7h-1V634.2h-1V654.1h-1V654.1h-1V632.8h-1V653.8h-1V653.8h-1V653.8h-1V647.8h-1V646.5h-1V654.8h-1V655.1h-1V655.1h-1V655.1h-1V655.9h-1V655.9h-1V655.9h-1V654.7h-1V642.6h-1V632.1h-1V655.4h-1V655.4h-1V655.4h-1V655.5h-1V631.6h-1V655.5h-1V637.1h-1V654.6h-1V654.6h-1V654.3h-1V654.3h-1V633.5h-1V655.2h-1V655.2h-1V645.3h-1V654.0h-1V654.0h-1V654.0h-1V642.3h-1V653.7h-1V641.3h-1V655.4h-1V655.4h-1V655.4h-1V644.8h-1V655.3h-1V640.7h-1V634.4h-1V643.9h-1V647.4h-1V648.7h-1V655.2h-1V655.2h-1V654.7h-1V654.7h-1V654.7h-1V645.9h-1V638.0h-1V655.7h-1V654.3h-1V654.3h-1V641.4h-1V646.7h-1V648.2h-1V654.1h-1V654.8h-1V654.8h-1V654.8h-1V654.5h-1V641.5h-1V654.5h-1V654.6h-1V654.6h-1V654.6h-1V654.8h-1V654.8h-1V633.6h-1V654.8h-1V654.8h-1V654.8h-1V636.1h-1V654.4h-1V654.4h-1V632.4h-1V633.6h-1V648.3h-1V632.6h-1V654.6h-1V643.8h-1V648.9h-1V644.0h-1V649.4h-1V636.1h-1V649.0h-1V639.0h-1V654.1h-1V654.1h-1V650.3h-1V635.3h-1V655.8h-1V655.8h-1V647.6h-1V655.0h-1V655.0h-1V641.4h-1V636.4h-1V648.9h-1V634.7h-1V655.9h-1V631.8h-1V638.1h-1V655.8h-1V630.4h-1V639.3h-1V654.0h-1V647.4h-1V655.9h-1V655.9h-1V648.0h-1V642.5h-1V656.0h-1V646.3h-1V655.8h-1V655.8h-1V648.7h-1V654.1h-1V654.1h-1V654.1h-1V654.8h-1V654.8h-1V654.8h-1V646.1h-1V655.1h-1V655.1h-1V634.2h-1V634.6h-1V654.5h-1V654.5h-1V645.4h-1V654.5h-1V653.9h-1V648.6h-1V640.5h-1V633.8h-1V653.8h-1V642.3h-1V637.1h-1V655.4h-1V655.4h-1V654.3h-1V637.5h-1V654.3h-1V654.8h-1V636.4h-1V654.8h-1V654.7h-1V654.7h-1V654.7h-1V655.9h-1V655.9h-1V631.5h-1V654.9h-1V644.2h-1V654.9h-1V654.1h-1V654.1h-1V645.7h-1V650.3h-1V650.3h-1V654.0h-1V636.4h-1V639.9h-1V644.2h-1V654.6h-1V644.9h-1V640.0h-1V649.4h-1V654.0h-1V654.0h-1V654.7h-1V637.7h-1V651.0h-1V653.9h-1V653.9h-1V653.9h-1V654.7h-1V654.7h-1V631.3h-1V655.1h-1V655.1h-1V655.1h-1V646.0h-1V653.7h-1V634.1h-1V630.5h-1V655.0h-1V655.0h-1V636.6h-1V655.5h-1V634.8h-1V654.7h-1V634.7h-1V654.7h-1V653.9h-1V653.9h-1V653.9h-1V650.4h-1V655.3h-1V630.7h-1V635.9h-1V644.7h-1V656.0h-1V653.9h-1V653.9h-1V653.9h-1V630.2h-1V654.0h-1V643.1h-1V655.4h-1V655.4h-1V641.4h-1V654.1h-1V654.1h-1V650.6h-1V654.5h-1V654.5h-1V641.7h-1V654.8h-1V654.8h-1V654.8h-1V645.9h-1V654.6h-1V633.6h-1V654.7h-1V641.4h-1V654.7h-1V655.7h-1V655.7h-1V655.7h-1V654.1h-1V640.7h-1V654.1h-1V646.0h-1V654.2h-1V654.2h-1V655.4h-1V644.8h-1V655.4h-1V654.9h-1V654.9h-1V634.7h-1V642.0h-1V650.2h-1V654.8h-1V649.9h-1V649.8h-1V635.8h-1V654.9h-1V654.9h-1V654.9h-1V632.1h-1V640.6h-1V640.1h-1V654.1h-1V638.6h-1V654.1h-1V645.2h-1V641.6h-1V655.0h-1V644.7h-1V654.5h-1V654.5h-1V655.4h-1V655.4h-1V630.3h-1V655.7h-1V655.7h-1V655.7h-1V648.7h-1V654.1h-1V646.0h-1V654.7h-1V654.7h-1V654.7h-1V655.7h-1V655.7h-1V655.7h-1V641.1h-1V654.5h-1V654.5h-1V645.1h-1V656.0h-1V650.9h-1V647.2h-1V655.0h-1V648.9h-1V654.7h-1V654.7h-1V646.5h-1V654.6h-1V654.6h-1V654.6h-1V645.8h-1V654.2h-1V654.2h-1V644.7h-1V654.2h-1V654.2h-1V632.4h-1V654.1h-1V635.6h-1V655.7h-1V638.4h-1V655.7h-1V654.6h-1V640.5h-1V633.9h-1V649.2h-1V655.7h-1V647.3h-1V634.1h-1V655.4h-1V631.3h-1V655.1h-1V655.1h-1V646.2h-1V641.2h-1V654.9h-1V636.3h-1V655.7h-1V650.6h-1V655.7h-1V654.9h-1V634.9h-1V654.9h-1V649.6h-1V643.5h-1V654.1h-1V655.6h-1V655.6h-1V638.8h-1V653.8h-1V653.8h-1V640.1h-1V653.9h-1V653.9h-1V653.9h-1V655.2h-1V650.6h-1V655.2h-1V654.6h-1V654.6h-1V654.6h-1V635.8h-1V647.5h-1V637.4h-1V655.7h-1V655.7h-1V634.0h-1V654.0h-1V654.0h-1V654.0h-1V655.6h-1V655.6h-1V655.6h-1V655.8h-1V655.8h-1V655.8h-1V654.0h-1V630.6h-1V636.8h-1V655.0h-1V655.0h-1V634.6h-1V654.6h-1V654.6h-1V654.6h-1V640.6h-1V655.7h-1V655.7h-1V654.5h-1V654.5h-1V641.5h-1V653.8h-1V653.8h-1V653.8h-1V653.8h-1V653.8h-1V653.8h-1V656.0h-1V656.0h-1V656.0h-1V654.7h-1V654.7h-1V654.7h-1V650.3h-1V643.6h-1V654.8h-1V632.6h-1V650.5h-1V655.7h-1V654.4h-1V654.4h-1V642.6h-1V654.7h-1V640.6h-1V642.6h-1V641.4h-1V655.3h-1V655.3h-1V653.9h-1V653.9h-1V648.3h-1V654.1h-1V654.1h-1V650.6h-1V635.6h-1V654.1h-1V654.1h-1V655.6h-1V655.6h-1V642.5h-1V654.8h-1V654.8h-1V654.8h-1V654.5h-1V654.5h-1V654.5h-1V630.5h-1V655.9h-1V655.9h-1V637.5h-1V655.9h-1V655.9h-1V634.1h-1V654.0h-1V637.4h-1V632.8h-1V654.6h-1V638.2h-1V655.6h-1V650.2h-1V655.6h-1V634.0h-1V655.2h-1V631.2h-1V655.9h-1V650.9h-1V649.0h-1V635.0h-1V641.5h-1V640.2h-1V655.1h-1V635.9h-1V655.1h-1V654.1h-1V654.1h-1V641.1h-1V634.8h-1V654.3h-1V635.3h-1V638.3h-1V654.4h-1V650.0h-1V655.2h-1V638.1h-1V649.3h-1V654.5h-1V654.5h-1V654.5h-1V644.1h-1V654.3h-1V654.3h-1V653.7h-1V653.7h-1V653.7h-1V655.7h-1V655.7h-1V655.7h-1V655.9h-1V655.9h-1V636.6h-1V654.6h-1V654.6h-1V639.6h-1V654.1h-1V654.1h-1V644.4h-1V655.6h-1V655.6h-1V655.6h-1V655.8h-1V655.8h-1V655.8h-1V655.0h-1V643.5h-1V633.6h-1V655.4h-1V655.4h-1V655.4h-1V632.9h-1V655.2h-1V655.2h-1V654.6h-1V654.6h-1V630.9h-1V646.9h-1V636.6h-1V641.5h-1V639.1h-1V633.9h-1V655.5h-1V654.1h-1V654.1h-1V654.1h-1V631.1h-1V653.7h-1V641.2h-1V655.7h-1V635.1h-1V655.7h-1V639.7h-1V647.9h-1V654.9h-1V655.7h-1V636.6h-1V655.7h-1V655.4h-1V655.4h-1V655.4h-1V633.2h-1V654.3h-1V636.3h-1V654.3h-1V645.6h-1V654.3h-1V645.7h-1V654.4h-1V654.4h-1V655.8h-1V632.0h-1V649.6h-1V654.8h-1V654.8h-1V654.8h-1V654.6h-1V654.6h-1V654.6h-1V656.0h-1V656.0h-1V656.0h-1V654.1h-1V654.1h-1V654.1h-1V634.6h-1V639.1h-1V650.9h-1V655.4h-1V655.4h-1V655.4h-1V641.6h-1V655.4h-1V637.3h-1V655.1h-1V641.3h-1V655.1h-1V647.6h-1V654.5h-1V654.5h-1V655.1h-1V655.1h-1V655.1h-1V647.4h-1V639.8h-1V648.8h-1V630.5h-1V654.1h-1V631.7h-1V655.5h-1V655.5h-1V655.5h-1V653.7h-1V641.8h-1V650.3h-1V654.2h-1V654.2h-1V633.2h-1V655.9h-1V631.7h-1V642.0h-1V638.4h-1V637.8h-1V655.8h-1V655.2h-1V655.2h-1V655.2h-1V655.4h-1V635.0h-1V655.4h-1V639.8h-1V644.9h-1V654.6h-1V654.3h-1V654.3h-1V645.1h-1V654.5h-1V646.4h-1V654.5h-1V655.4h-1V655.4h-1V655.4h-1V645.5h-1V654.4h-1V654.4h-1V638.2h-1V655.9h-1V636.2h-1V655.8h-1V636.4h-1V655.8h-1V655.8h-1V655.8h-1V650.5h-1V643.8h-1V630.8h-1V631.9h-1V654.5h-1V654.5h-1V644.3h-1V655.8h-1V647.1h-1V635.3h-1V653.8h-1V646.6h-1V653.8h-1V632.6h-1V643.1h-1V640.0h-1V650.3h-1V655.3h-1V638.5h-1V654.8h-1V654.8h-1V630.5h-1V633.6h-1V630.6h-1V654.1h-1V634.4h-1V639.7h-1V654.2h-1V630.1h-1V654.5h-1V654.5h-1V654.1h-1V654.1h-1V654.1h-1V654.4h-1V654.4h-1V654.4h-1V655.3h-1V655.3h-1V655.3h-1V653.9h-1V633.4h-1V631.7h-1V655.7h-1V655.7h-1V655.7h-1V655.3h-1V646.9h-1V655.3h-1V655.3h-1V655.3h-1V648.0h-1V648.3h-1V654.2h-1V641.3h-1V637.6h-1V654.0h-1V654.0h-1V654.7h-1V654.7h-1V654.7h-1V654.1h-1V640.5h-1V654.1h-1V655.2h-1V655.2h-1V655.2h-1V646.2h-1V654.8h-1V654.8h-1V648.1h-1V655.1h-1V655.1h-1V655.9h-1V655.9h-1V655.9h-1V654.1h-1V646.9h-1V646.4h-1V654.0h-1V641.1h-1V654.0h-1V655.4h-1V655.4h-1V655.4h-1V655.5h-1V634.0h-1V655.5h-1V632.4h-1V635.7h-1V654.5h-1V654.5h-1V654.5h-1V638.5h-1V646.2h-1V640.6h-1V654.6h-1V635.6h-1V655.4h-1V655.4h-1V645.0h-1V633.7h-1V655.2h-1V654.0h-1V654.0h-1V645.1h-1V649.6h-1V654.1h-1V654.1h-1V655.3h-1V643.6h-1V655.3h-1V645.1h-1V640.4h-1V655.2h-1V655.2h-1V645.8h-1V655.2h-1V644.2h-1V654.5h-1V654.5h-1V649.8h-1V655.2h-1V648.6h-1V635.8h-1V655.9h-1V655.9h-1V642.3h-1V653.7h-1V639.2h-1V655.6h-1V655.6h-1V637.5h-1V632.0h-1V654.4h-1V654.4h-1V648.2h-1V655.3h-1V655.3h-1V634.0h-1V634.0h-1V655.9h-1V654.8h-1V654.8h-1V635.0h-1V655.7h-1V655.7h-1V655.7h-1V655.6h-1V655.6h-1V655.6h-1V654.8h-1V654.8h-1V654.8h-1V650.8h-1V646.3h-1V637.6h-1V640.1h-1V634.6h-1V655.7h-1V655.3h-1V644.8h-1V655.3h-1V634.9h-1V654.1h-1V634.2h-1V655.8h-1V655.8h-1V655.8h-1V655.2h-1V632.0h-1V655.2h-1V655.4h-1V655.4h-1V655.4h-1V644.5h-1V655.9h-1V655.9h-1V640.5h-1V638.8h-1V654.5h-1V654.3h-1V654.3h-1V654.3h-1V633.8h-1V653.8h-1V641.9h-1V654.9h-1V645.7h-1V654.9h-1V646.1h-1V655.9h-1V655.9h-1V655.6h-1V655.6h-1V647.7h-1V630.5h-1V648.5h-1V632.0h-1V633.0h-1V642.4h-1V655.4h-1V655.2h-1V655.2h-1V655.2h-1V647.1h-1V639.8h-1V655.8h-1V654.7h-1V654.7h-1V654.7h-1V638.9h-1V654.2h-1V654.2h-1V655.3h-1V655.3h-1V655.3h-1V655.1h-1V655.1h-1V655.1h-1V655.1h-1V655.1h-1V655.1h-1V655.3h-1V633.8h-1V655.3h-1V645.6h-1V633.5h-1V634.0h-1V637.0h-1V634.8h-1V654.3h-1V642.7h-1V652.9h-1V653.1h-1V644.0h-1V635.8h-1V644.0h-1V653.6h-1V646.8h-1V654.8h-1V646.8h-1V646.8h-1V655.3h-1V647.0h-1V634.0h-1V637.9h-1V634.4h-1V645.3h-1V638.9h-1V642.7h-1V653.7h-1V642.7h-1V647.3h-1V647.3h-1V647.3h-1V644.1h-1V655.7h-1V644.1h-1V645.3h-1V652.9h-1V653.8h-1V647.3h-1V647.3h-1V655.2h-1V639.0h-1V647.4h-1V647.4h-1V652.7h-1V638.8h-1V635.5h-1V637.9h-1V637.9h-1V637.9h-1V640.6h-1V640.6h-1V640.6h-1V633.8h-1V638.1h-1V638.1h-1V640.9h-1V633.2h-1V640.9h-1V639.1h-1V634.0h-1V639.1h-1V640.1h-1V640.1h-1V643.3h-1V638.2h-1V633.4h-1V638.2h-1V640.4h-1V640.4h-1V644.3h-1V638.8h-1V638.8h-1V638.8h-1V639.7h-1V639.7h-1V639.7h-1V640.1h-1V640.1h-1V640.1h-1V642.3h-1V638.8h-1V638.8h-1V639.9h-1V639.9h-1V644.5h-1V644.5h-1V639.5h-1V643.7h-1V640.2h-1V640.2h-1V633.9h-1V639.8h-1V639.8h-1V639.8h-1V639.4h-1V639.4h-1V639.4h-1V641.2h-1V641.2h-1V641.2h-1V639.8h-1V639.8h-1V632.9h-1V638.6h-1V642.8h-1V644.4h-1V640.9h-1V640.9h-1V640.9h-1V637.5h-1V644.9h-1V637.5h-1V639.0h-1V639.0h-1V633.9h-1V645.2h-1V638.5h-1V645.4h-1V639.6h-1V636.0h-1V639.6h-1V640.0h-1V640.0h-1V636.1h-1V640.1h-1V640.1h-1V640.1h-1V638.8h-1V638.8h-1V638.8h-1V639.9h-1V639.9h-1V639.9h-1V640.9h-1V636.5h-1V642.6h-1V622.7h-1V622.7h-1V622.7h-1V622.7h-1V622.7h-1V622.7h-1V622.7h-1V622.7h-1V622.7h-1V622.7h-1V622.7h-1V622.7h-1V622.7h-1V622.7h-1V622.7h-1V622.7h-1V622.7h-1V622.7h-1V622.7h-1V622.7h-1V622.7h-1V622.7h-1V622.7h-1V622.7h-1V622.7h-1V622.7h-1V622.7h-1Z" fill="#f5deb3"/>
<rect x="609.20" y="589.40" width="2.20" height="66.60" fill="#e00000"/>
<rect x="611.20" y="662.30" width="1058.80" height="66.50" fill="#737373"/>
<path d="M611,695.5V694.6h1V694.6h1V694.6h1V694.6h1V694.6h1V694.6h1V694.6h1V694.6h1V694.6h1V694.6h1V694.6h1V694.6h1V694.6h1V694.6h1V694.6h1V694.6h1V694.6h1V694.6h1V675.6h1V677.9h1V684.5h1V676.3h1V676.3h1V676.3h1V678.3h1V680.9h1V678.3h1V676.4h1V676.4h1V676.4h1V675.3h1V679.9h1V679.9h1V680.6h1V680.6h1V680.6h1V677.0h1V677.0h1V677.0h1V671.7h1V672.6h1V677.5h1V680.5h1V680.5h1V680.5h1V674.9h1V680.5h1V681.8h1V676.6h1V676.6h1V676.6h1V678.3h1V672.6h1V678.3h1V671.8h1V674.2h1V676.9h1V676.6h1V676.6h1V676.6h1V679.2h1V685.2h1V672.9h1V685.3h1V676.3h1V676.3h1V682.6h1V678.8h1V678.8h1V671.9h1V673.6h1V678.8h1V680.0h1V680.0h1V680.0h1V673.9h1V672.2h1V677.2h1V678.6h1V678.6h1V678.6h1V678.6h1V678.6h1V678.6h1V679.3h1V674.1h1V679.3h1V676.4h1V676.4h1V676.4h1V680.2h1V680.2h1V680.2h1V679.0h1V679.0h1V679.0h1V677.7h1V677.7h1V677.7h1V679.4h1V679.4h1V679.4h1V674.2h1V674.2h1V674.2h1V675.5h1V675.5h1V675.5h1V673.4h1V673.4h1V673.4h1V674.0h1V674.0h1V674.0h1V674.0h1V674.0h1V674.0h1V671.1h1V671.1h1V671.1h1V674.8h1V674.8h1V674.8h1V672.4h1V672.4h1V678.4h1V672.9h1V672.9h1V672.9h1V672.0h1V672.0h1V669.1h1V673.5h1V678.8h1V673.5h1V675.4h1V682.0h1V668.6h1V682.1h1V674.8h1V674.8h1V672.8h1V677.7h1V668.3h1V674.3h1V666.9h1V674.3h1V675.4h1V667.8h1V675.4h1V672.9h1V672.9h1V672.9h1V671.8h1V671.8h1V667.6h1V673.0h1V673.0h1V673.0h1V674.0h1V669.3h1V674.0h1V667.5h1V672.7h1V672.7h1V671.9h1V671.9h1V671.9h1V672.3h1V672.3h1V672.3h1V673.4h1V673.4h1V673.4h1V672.8h1V672.8h1V672.8h1V680.4h1V671.5h1V671.5h1V668.8h1V663.9h1V668.8h1V667.5h1V667.5h1V667.5h1V674.3h1V674.3h1V674.3h1V671.5h1V671.5h1V671.5h1V674.6h1V674.6h1V674.6h1V672.7h1V672.7h1V672.7h1V672.5h1V672.5h1V664.8h1V671.7h1V671.7h1V671.7h1V675.5h1V675.5h1V675.5h1V669.5h1V669.5h1V669.5h1V672.3h1V672.3h1V683.1h1V662.8h1V668.4h1V668.4h1V673.1h1V673.1h1V681.6h1V670.9h1V670.9h1V680.7h1V664.9h1V668.6h1V668.6h1V663.2h1V669.9h1V669.9h1V662.8h1V669.5h1V669.5h1V667.4h1V683.1h1V667.4h1V674.3h1V674.3h1V680.4h1V664.4h1V665.4h1V675.2h1V669.2h1V682.0h1V669.2h1V670.4h1V670.4h1V670.4h1V675.1h1V680.3h1V675.1h1V667.7h1V667.7h1V667.7h1V670.8h1V670.8h1V670.8h1V674.4h1V674.4h1V674.4h1V674.0h1V674.0h1V663.4h1V680.6h1V674.8h1V674.8h1V671.4h1V671.4h1V663.2h1V677.7h1V675.1h1V675.1h1V674.6h1V674.6h1V674.6h1V674.4h1V674.4h1V674.4h1V672.7h1V672.7h1V672.7h1V674.4h1V674.4h1V674.4h1V671.9h1V671.9h1V671.9h1V670.6h1V670.6h1V665.5h1V662.7h1V673.9h1V673.9h1V675.6h1V675.6h1V675.6h1V671.9h1V665.1h1V682.5h1V672.3h1V683.5h1V672.3h1V674.2h1V674.2h1V674.2h1V675.3h1V675.3h1V675.3h1V669.7h1V669.7h1V669.7h1V674.6h1V674.6h1V674.6h1V683.9h1V664.9h1V664.3h1V667.2h1V667.2h1V667.2h1V673.2h1V673.2h1V683.6h1V669.8h1V669.8h1V669.8h1V665.4h1V667.2h1V667.2h1V675.2h1V675.2h1V675.2h1V665.4h1V672.6h1V672.6h1V664.8h1V664.3h1V664.8h1V672.1h1V665.5h1V672.1h1V674.0h1V674.0h1V674.0h1V674.9h1V663.8h1V674.9h1V670.4h1V670.4h1V663.8h1V671.4h1V671.4h1V671.4h1V669.3h1V669.3h1V669.3h1V668.5h1V664.6h1V663.1h1V668.5h1V684.9h1V668.5h1V674.9h1V674.9h1V674.9h1V675.1h1V665.0h1V675.1h1V664.2h1V672.4h1V672.4h1V670.8h1V670.8h1V670.8h1V670.6h1V670.6h1V670.6h1V667.3h1V667.3h1V667.3h1V668.6h1V685.0h1V683.4h1V669.8h1V663.1h1V669.8h1V665.2h1V675.4h1V675.4h1V667.4h1V667.4h1V667.4h1V672.5h1V663.7h1V672.5h1V663.9h1V679.7h1V669.3h1V667.5h1V664.6h1V667.5h1V671.6h1V671.6h1V671.6h1V667.5h1V667.5h1V667.5h1V674.7h1V674.7h1V662.4h1V675.3h1V675.3h1V675.3h1V672.2h1V672.2h1V672.2h1V670.7h1V670.7h1V670.7h1V672.6h1V672.6h1V672.6h1V668.3h1V668.3h1V678.7h1V665.1h1V663.2h1V671.4h1V673.9h1V673.9h1V673.9h1V668.1h1V668.1h1V668.1h1V675.5h1V675.5h1V682.3h1V664.6h1V672.9h1V672.9h1V669.5h1V669.5h1V669.5h1V667.6h1V667.6h1V667.6h1V668.7h1V668.7h1V668.7h1V671.1h1V665.3h1V671.1h1V670.6h1V670.6h1V670.6h1V667.6h1V667.6h1V663.1h1V669.8h1V669.8h1V669.8h1V668.4h1V668.4h1V668.4h1V671.1h1V671.1h1V671.1h1V670.9h1V664.3h1V680.1h1V667.8h1V667.8h1V667.8h1V674.7h1V674.7h1V674.7h1V672.4h1V672.4h1V672.4h1V673.3h1V673.3h1V680.3h1V669.0h1V663.7h1V669.0h1V668.0h1V668.0h1V668.0h1V671.0h1V671.0h1V671.0h1V670.4h1V685.3h1V663.8h1V684.0h1V670.4h1V670.4h1V669.6h1V664.0h1V669.6h1V667.3h1V667.3h1V667.3h1V667.6h1V667.6h1V667.6h1V665.0h1V684.8h1V680.5h1V674.7h1V674.7h1V674.7h1V668.7h1V668.7h1V668.7h1V670.2h1V665.3h1V664.9h1V672.4h1V672.4h1V672.4h1V674.9h1V674.9h1V674.9h1V674.6h1V674.6h1V674.6h1V671.3h1V671.3h1V663.1h1V669.4h1V664.0h1V669.4h1V669.2h1V669.2h1V669.2h1V671.3h1V671.3h1V671.3h1V673.0h1V673.0h1V673.0h1V675.2h1V675.2h1V675.2h1V675.0h1V664.0h1V675.0h1V670.9h1V670.9h1V664.4h1V663.1h1V668.6h1V664.8h1V671.6h1V671.6h1V664.9h1V667.2h1V667.2h1V664.7h1V667.3h1V667.3h1V664.3h1V668.9h1V668.9h1V668.9h1V670.0h1V665.5h1V670.0h1V672.0h1V672.0h1V672.0h1V672.3h1V672.3h1V672.3h1V674.3h1V674.3h1V674.3h1V667.0h1V667.0h1V667.0h1V671.5h1V671.5h1V684.2h1V664.4h1V671.6h1V671.6h1V662.9h1V673.9h1V673.9h1V674.4h1V674.4h1V674.4h1V682.0h1V675.3h1V675.3h1V672.4h1V681.3h1V672.4h1V665.3h1V669.5h1V669.5h1V672.4h1V672.4h1V672.4h1V673.5h1V673.5h1V673.5h1V681.6h1V669.3h1V663.1h1V672.0h1V672.0h1V672.0h1V675.1h1V664.3h1V675.1h1V675.4h1V675.4h1V675.4h1V667.6h1V667.6h1V667.6h1V667.5h1V667.5h1V667.5h1V674.2h1V664.1h1V674.2h1V671.0h1V671.0h1V671.0h1V670.8h1V682.7h1V670.8h1V670.7h1V670.7h1V665.3h1V677.5h1V672.6h1V672.6h1V668.8h1V668.8h1V668.8h1V670.2h1V670.2h1V670.2h1V673.3h1V673.3h1V673.3h1V685.1h1V674.1h1V674.1h1V662.9h1V675.5h1V675.5h1V675.3h1V663.2h1V675.3h1V670.3h1V670.3h1V665.4h1V665.4h1V669.7h1V669.7h1V667.9h1V663.5h1V667.9h1V674.6h1V674.6h1V674.6h1V675.6h1V675.6h1V675.6h1V683.8h1V671.6h1V671.6h1V664.5h1V664.2h1V673.8h1V684.4h1V670.0h1V670.0h1V671.7h1V671.7h1V683.3h1V671.3h1V671.3h1V671.3h1V669.9h1V669.9h1V669.9h1V664.8h1V673.1h1V673.1h1V673.3h1V673.3h1V673.3h1V674.6h1V674.6h1V663.5h1V668.3h1V662.4h1V668.3h1V670.1h1V670.1h1V670.1h1V665.4h1V672.8h1V672.8h1V664.6h1V677.7h1V668.1h1V667.9h1V664.2h1V667.9h1V675.4h1V675.4h1V663.9h1V667.5h1V667.5h1V663.1h1V674.6h1V662.3h1V674.6h1V671.8h1V671.8h1V671.8h1V671.9h1V671.9h1V671.9h1V672.3h1V672.3h1V672.3h1V668.6h1V685.1h1V668.6h1V671.6h1V671.6h1V671.6h1V671.3h1V671.3h1V671.3h1V671.5h1V671.5h1V683.9h1V669.6h1V662.3h1V684.2h1V674.8h1V674.8h1V674.8h1V674.2h1V663.7h1V674.2h1V663.2h1V679.2h1V672.5h1V670.5h1V670.5h1V670.5h1V667.7h1V667.7h1V667.7h1V674.5h1V674.5h1V674.5h1V674.5h1V674.5h1V674.5h1V675.6h1V675.6h1V675.6h1V669.9h1V669.9h1V669.9h1V672.7h1V672.7h1V672.7h1V670.3h1V681.5h1V663.0h1V668.9h1V663.8h1V668.9h1V674.6h1V674.6h1V674.6h1V673.5h1V673.5h1V673.5h1V670.0h1V670.0h1V663.4h1V670.6h1V670.6h1V670.6h1V673.0h1V673.0h1V673.0h1V669.1h1V669.1h1V664.8h1V685.1h1V663.1h1V664.1h1V671.8h1V671.8h1V671.8h1V675.4h1V675.4h1V675.4h1V668.4h1V668.4h1V668.4h1V662.7h1V670.3h1V670.3h1V675.0h1V664.4h1V664.9h1V675.6h1V675.6h1V675.6h1V677.6h1V672.2h1V672.2h1V673.7h1V673.7h1V673.7h1V675.4h1V675.4h1V675.4h1V668.2h1V668.2h1V668.2h1V667.7h1V667.7h1V667.7h1V669.9h1V669.9h1V669.9h1V674.0h1V674.0h1V674.0h1V681.1h1V668.9h1V668.9h1V674.8h1V674.8h1V683.2h1V682.0h1V665.6h1V675.5h1V667.3h1V667.3h1V667.3h1V685.5h1V663.6h1V674.9h1V671.5h1V671.5h1V671.5h1V670.3h1V682.0h1V670.3h1V668.5h1V668.5h1V668.5h1V675.0h1V675.0h1V675.0h1V663.2h1V670.5h1V670.5h1V668.2h1V668.2h1V668.2h1V674.5h1V663.5h1V674.5h1V663.9h1V670.1h1V670.1h1V674.3h1V674.3h1V663.4h1V673.5h1V664.6h1V673.5h1V664.5h1V673.1h1V664.5h1V673.8h1V673.8h1V662.8h1V672.8h1V672.8h1V672.8h1V675.1h1V675.1h1V675.1h1V668.5h1V668.5h1V668.5h1V668.3h1V668.3h1V668.3h1V670.3h1V670.3h1V681.9h1V668.0h1V668.0h1V668.0h1V681.9h1V670.5h1V665.3h1V669.1h1V665.4h1V669.1h1V673.1h1V664.1h1V682.8h1V669.6h1V669.6h1V669.6h1V670.2h1V681.6h1V670.2h1V662.7h1V670.2h1V670.2h1V667.4h1V667.4h1V667.4h1V679.4h1V667.0h1V667.0h1V682.2h1V673.2h1V673.2h1V673.4h1V673.4h1V673.4h1V671.7h1V662.9h1V671.7h1V673.5h1V673.5h1V673.5h1V667.8h1V667.8h1V667.8h1V677.8h1V664.0h1V670.3h1V664.9h1V671.1h1V671.1h1V673.7h1V665.2h1V677.4h1V672.9h1V665.3h1V672.9h1V669.2h1V669.2h1V669.2h1V683.3h1V665.0h1V673.4h1V664.6h1V671.4h1V671.4h1V669.3h1V669.3h1V669.3h1V672.3h1V672.3h1V664.8h1V684.9h1V671.6h1V671.6h1V667.3h1V667.3h1V667.3h1V670.5h1V670.5h1V670.5h1V670.1h1V670.1h1V670.1h1V663.7h1V674.3h1V664.6h1V673.6h1V673.6h1V673.6h1V673.2h1V673.2h1V673.2h1V674.6h1V674.6h1V674.6h1V671.4h1V671.4h1V671.4h1V681.7h1V674.9h1V663.2h1V672.6h1V672.6h1V672.6h1V674.4h1V677.2h1V676.4h1V679.4h1V676.6h1V684.7h1V679.4h1V680.7h1V676.1h1V678.0h1V682.8h1V681.5h1V682.1h1V681.2h1V680.3h1V680.5h1V681.9h1V682.1h1V684.0h1V683.3h1V682.3h1V683.8h1V684.7h1V687.4h1V686.1h1V685.7h1V687.1h1V687.2h1V688.4h1V687.0h1V688.4h1V688.5h1V690.5h1V689.7h1V690.0h1V691.8h1V690.8h1V692.2h1V692.3h1V692.4h1V692.9h1V693.7h1V694.4h1V694.7h1V695.2h1V695.5h1V695.5h1V695.5h1V695.5V695.5h-1V695.5h-1V695.5h-1V695.9h-1V696.4h-1V696.7h-1V697.4h-1V698.2h-1V698.7h-1V698.8h-1V698.9h-1V700.3h-1V699.3h-1V701.1h-1V701.4h-1V700.6h-1V702.6h-1V702.7h-1V704.1h-1V702.7h-1V703.9h-1V704.0h-1V705.4h-1V705.0h-1V703.7h-1V706.4h-1V707.3h-1V708.8h-1V707.8h-1V707.1h-1V709.0h-1V709.2h-1V710.6h-1V710.8h-1V709.9h-1V709.0h-1V709.6h-1V708.3h-1V713.1h-1V715.0h-1V710.4h-1V711.7h-1V706.4h-1V714.5h-1V711.7h-1V714.7h-1V713.9h-1V716.7h-1V718.5h-1V718.5h-1V718.5h-1V727.9h-1V716.2h-1V709.4h-1V719.7h-1V719.7h-1V719.7h-1V716.5h-1V716.5h-1V716.5h-1V717.9h-1V717.9h-1V717.9h-1V717.5h-1V717.5h-1V717.5h-1V726.5h-1V716.8h-1V727.4h-1V721.0h-1V721.0h-1V721.0h-1V720.6h-1V720.6h-1V720.6h-1V723.8h-1V723.8h-1V723.8h-1V719.5h-1V719.5h-1V706.2h-1V726.3h-1V718.8h-1V718.8h-1V721.8h-1V721.8h-1V721.8h-1V719.7h-1V719.7h-1V726.5h-1V717.7h-1V726.1h-1V707.8h-1V721.9h-1V721.9h-1V721.9h-1V718.2h-1V725.8h-1V718.2h-1V713.7h-1V725.9h-1V717.4h-1V720.0h-1V720.0h-1V726.2h-1V720.8h-1V727.1h-1V713.3h-1V723.3h-1V723.3h-1V723.3h-1V717.6h-1V717.6h-1V717.6h-1V719.4h-1V728.2h-1V719.4h-1V717.7h-1V717.7h-1V717.7h-1V717.9h-1V717.9h-1V708.9h-1V724.1h-1V724.1h-1V711.7h-1V723.7h-1V723.7h-1V723.7h-1V720.9h-1V720.9h-1V728.4h-1V720.9h-1V709.5h-1V720.9h-1V721.5h-1V721.5h-1V721.5h-1V708.3h-1V727.0h-1V718.0h-1V722.0h-1V725.7h-1V722.0h-1V725.8h-1V720.6h-1V709.2h-1V723.1h-1V723.1h-1V723.1h-1V709.2h-1V720.8h-1V720.8h-1V722.8h-1V722.8h-1V722.8h-1V722.6h-1V722.6h-1V722.6h-1V716.0h-1V716.0h-1V716.0h-1V718.3h-1V718.3h-1V718.3h-1V728.3h-1V717.3h-1V717.3h-1V726.6h-1V718.0h-1V726.6h-1V717.6h-1V726.5h-1V717.6h-1V727.7h-1V716.8h-1V716.8h-1V721.0h-1V721.0h-1V727.2h-1V716.6h-1V727.6h-1V716.6h-1V722.9h-1V722.9h-1V722.9h-1V720.6h-1V720.6h-1V727.9h-1V716.1h-1V716.1h-1V716.1h-1V722.6h-1V722.6h-1V722.6h-1V720.8h-1V709.1h-1V720.8h-1V719.6h-1V719.6h-1V719.6h-1V716.2h-1V727.5h-1V705.6h-1V723.8h-1V723.8h-1V723.8h-1V715.6h-1V725.5h-1V709.1h-1V707.9h-1V716.3h-1V716.3h-1V722.2h-1V722.2h-1V710.0h-1V717.1h-1V717.1h-1V717.1h-1V721.2h-1V721.2h-1V721.2h-1V723.4h-1V723.4h-1V723.4h-1V722.9h-1V722.9h-1V722.9h-1V715.7h-1V715.7h-1V715.7h-1V717.4h-1V717.4h-1V717.4h-1V718.9h-1V718.9h-1V713.5h-1V715.5h-1V715.5h-1V715.5h-1V726.2h-1V726.7h-1V716.1h-1V720.8h-1V720.8h-1V728.4h-1V722.7h-1V722.7h-1V722.7h-1V715.7h-1V715.7h-1V715.7h-1V719.3h-1V719.3h-1V719.3h-1V727.0h-1V728.0h-1V706.0h-1V726.3h-1V722.0h-1V722.0h-1V718.1h-1V718.1h-1V718.1h-1V720.5h-1V720.5h-1V720.5h-1V727.7h-1V721.1h-1V721.1h-1V717.6h-1V717.6h-1V717.6h-1V716.5h-1V716.5h-1V716.5h-1V722.2h-1V727.3h-1V722.2h-1V728.1h-1V709.6h-1V720.8h-1V718.4h-1V718.4h-1V718.4h-1V721.2h-1V721.2h-1V721.2h-1V715.5h-1V715.5h-1V715.5h-1V716.6h-1V716.6h-1V716.6h-1V716.6h-1V716.6h-1V716.6h-1V723.4h-1V723.4h-1V723.4h-1V720.6h-1V720.6h-1V720.6h-1V718.6h-1V711.9h-1V727.9h-1V716.9h-1V727.4h-1V716.9h-1V716.3h-1V716.3h-1V716.3h-1V706.9h-1V728.8h-1V721.5h-1V707.2h-1V719.6h-1V719.6h-1V719.8h-1V719.8h-1V719.8h-1V719.5h-1V719.5h-1V719.5h-1V722.5h-1V706.0h-1V722.5h-1V718.8h-1V718.8h-1V718.8h-1V719.2h-1V719.2h-1V719.2h-1V719.3h-1V719.3h-1V719.3h-1V716.5h-1V728.8h-1V716.5h-1V728.0h-1V723.6h-1V723.6h-1V727.2h-1V715.7h-1V715.7h-1V723.2h-1V726.9h-1V723.2h-1V723.0h-1V713.4h-1V726.5h-1V718.3h-1V718.3h-1V725.7h-1V721.0h-1V721.0h-1V721.0h-1V722.8h-1V728.7h-1V722.8h-1V727.6h-1V716.5h-1V716.5h-1V717.8h-1V717.8h-1V717.8h-1V718.0h-1V718.0h-1V726.3h-1V721.2h-1V721.2h-1V721.2h-1V719.8h-1V719.8h-1V719.8h-1V707.8h-1V719.4h-1V719.4h-1V721.1h-1V721.1h-1V706.7h-1V717.3h-1V726.9h-1V726.6h-1V719.5h-1V719.5h-1V707.3h-1V715.5h-1V715.5h-1V715.5h-1V716.5h-1V716.5h-1V716.5h-1V723.2h-1V727.6h-1V723.2h-1V721.4h-1V721.4h-1V725.7h-1V725.7h-1V720.8h-1V720.8h-1V715.8h-1V727.9h-1V715.8h-1V715.6h-1V715.6h-1V728.2h-1V717.0h-1V717.0h-1V706.0h-1V717.8h-1V717.8h-1V717.8h-1V720.9h-1V720.9h-1V720.9h-1V722.3h-1V722.3h-1V722.3h-1V718.5h-1V718.5h-1V713.6h-1V725.8h-1V720.4h-1V720.4h-1V720.3h-1V708.4h-1V720.3h-1V720.1h-1V720.1h-1V720.1h-1V716.9h-1V727.0h-1V716.9h-1V723.6h-1V723.6h-1V723.6h-1V723.5h-1V723.5h-1V723.5h-1V715.7h-1V715.7h-1V715.7h-1V716.0h-1V726.8h-1V716.0h-1V719.1h-1V719.1h-1V719.1h-1V728.0h-1V721.8h-1V709.5h-1V717.6h-1V717.6h-1V717.6h-1V718.7h-1V718.7h-1V718.7h-1V721.6h-1V721.6h-1V725.8h-1V718.7h-1V709.8h-1V718.7h-1V715.8h-1V715.8h-1V709.1h-1V716.7h-1V716.7h-1V716.7h-1V717.2h-1V717.2h-1V728.2h-1V719.5h-1V719.5h-1V726.7h-1V706.9h-1V719.6h-1V719.6h-1V724.1h-1V724.1h-1V724.1h-1V716.8h-1V716.8h-1V716.8h-1V718.8h-1V718.8h-1V718.8h-1V719.1h-1V719.1h-1V719.1h-1V721.1h-1V725.6h-1V721.1h-1V722.2h-1V722.2h-1V722.2h-1V726.8h-1V723.8h-1V723.8h-1V726.4h-1V723.9h-1V723.9h-1V726.2h-1V719.5h-1V719.5h-1V726.3h-1V722.5h-1V728.0h-1V726.7h-1V720.2h-1V720.2h-1V716.1h-1V727.1h-1V716.1h-1V715.9h-1V715.9h-1V715.9h-1V718.1h-1V718.1h-1V718.1h-1V719.8h-1V719.8h-1V719.8h-1V721.9h-1V721.9h-1V721.9h-1V721.7h-1V727.1h-1V721.7h-1V728.0h-1V719.8h-1V719.8h-1V716.5h-1V716.5h-1V716.5h-1V716.2h-1V716.2h-1V716.2h-1V718.7h-1V718.7h-1V718.7h-1V726.2h-1V725.8h-1V720.9h-1V722.4h-1V722.4h-1V722.4h-1V716.4h-1V716.4h-1V716.4h-1V710.6h-1V706.3h-1V726.1h-1V723.5h-1V723.5h-1V723.5h-1V723.8h-1V723.8h-1V723.8h-1V721.5h-1V727.1h-1V721.5h-1V720.7h-1V720.7h-1V707.1h-1V727.3h-1V705.8h-1V720.7h-1V720.1h-1V720.1h-1V720.1h-1V723.1h-1V723.1h-1V723.1h-1V722.1h-1V727.4h-1V722.1h-1V710.8h-1V717.8h-1V717.8h-1V718.7h-1V718.7h-1V718.7h-1V716.4h-1V716.4h-1V716.4h-1V723.3h-1V723.3h-1V723.3h-1V711.0h-1V726.8h-1V720.2h-1V720.0h-1V720.0h-1V720.0h-1V722.7h-1V722.7h-1V722.7h-1V721.3h-1V721.3h-1V721.3h-1V728.0h-1V723.5h-1V723.5h-1V720.5h-1V720.5h-1V720.5h-1V720.0h-1V725.8h-1V720.0h-1V722.4h-1V722.4h-1V722.4h-1V723.5h-1V723.5h-1V723.5h-1V721.6h-1V721.6h-1V721.6h-1V718.2h-1V718.2h-1V726.5h-1V708.8h-1V715.6h-1V715.6h-1V723.0h-1V723.0h-1V723.0h-1V717.2h-1V717.2h-1V717.2h-1V719.7h-1V727.9h-1V726.0h-1V712.4h-1V722.8h-1V722.8h-1V718.5h-1V718.5h-1V718.5h-1V720.4h-1V720.4h-1V720.4h-1V718.9h-1V718.9h-1V718.9h-1V715.8h-1V715.8h-1V715.8h-1V728.7h-1V716.4h-1V716.4h-1V723.6h-1V723.6h-1V723.6h-1V719.5h-1V719.5h-1V719.5h-1V723.6h-1V726.5h-1V723.6h-1V721.8h-1V711.4h-1V727.2h-1V718.6h-1V727.4h-1V718.6h-1V723.7h-1V723.7h-1V723.7h-1V715.7h-1V715.7h-1V725.9h-1V721.3h-1V728.0h-1V721.3h-1V707.7h-1V706.1h-1V722.5h-1V723.8h-1V723.8h-1V723.8h-1V720.5h-1V720.5h-1V720.5h-1V720.3h-1V720.3h-1V720.3h-1V718.7h-1V718.7h-1V726.9h-1V716.0h-1V726.1h-1V716.0h-1V716.2h-1V716.2h-1V716.2h-1V722.6h-1V706.2h-1V722.6h-1V728.0h-1V726.5h-1V722.6h-1V721.8h-1V721.8h-1V721.8h-1V719.7h-1V719.7h-1V719.7h-1V727.3h-1V720.7h-1V720.7h-1V716.2h-1V727.3h-1V716.2h-1V717.1h-1V717.1h-1V717.1h-1V719.0h-1V725.6h-1V719.0h-1V726.3h-1V726.8h-1V726.3h-1V718.5h-1V718.5h-1V725.7h-1V715.9h-1V715.9h-1V715.9h-1V723.9h-1V723.9h-1V725.7h-1V721.3h-1V721.3h-1V721.3h-1V707.5h-1V717.9h-1V717.9h-1V723.9h-1V723.9h-1V723.9h-1V726.8h-1V726.2h-1V707.2h-1V716.5h-1V716.5h-1V716.5h-1V721.4h-1V721.4h-1V721.4h-1V715.8h-1V715.8h-1V715.8h-1V716.9h-1V716.9h-1V716.9h-1V718.8h-1V707.6h-1V718.8h-1V708.6h-1V726.0h-1V719.2h-1V715.5h-1V715.5h-1V715.5h-1V717.2h-1V717.2h-1V728.4h-1V725.6h-1V720.5h-1V720.5h-1V719.2h-1V719.2h-1V719.2h-1V716.7h-1V716.7h-1V716.7h-1V718.4h-1V718.4h-1V718.4h-1V716.7h-1V716.7h-1V716.7h-1V716.5h-1V716.5h-1V716.5h-1V716.0h-1V716.0h-1V713.4h-1V727.9h-1V719.7h-1V719.7h-1V716.3h-1V716.3h-1V710.5h-1V727.7h-1V717.1h-1V717.1h-1V716.7h-1V716.7h-1V716.7h-1V720.3h-1V720.3h-1V720.3h-1V723.4h-1V723.4h-1V723.4h-1V716.0h-1V710.8h-1V716.0h-1V720.7h-1V720.7h-1V720.7h-1V721.9h-1V709.1h-1V721.9h-1V715.9h-1V725.7h-1V726.7h-1V710.7h-1V716.8h-1V716.8h-1V723.7h-1V708.0h-1V723.7h-1V721.6h-1V721.6h-1V728.3h-1V721.2h-1V721.2h-1V727.9h-1V722.5h-1V722.5h-1V726.2h-1V710.4h-1V720.2h-1V720.2h-1V709.5h-1V718.0h-1V718.0h-1V722.7h-1V722.7h-1V728.3h-1V708.0h-1V718.8h-1V718.8h-1V721.6h-1V721.6h-1V721.6h-1V715.6h-1V715.6h-1V715.6h-1V719.4h-1V719.4h-1V719.4h-1V726.3h-1V718.6h-1V718.6h-1V718.4h-1V718.4h-1V718.4h-1V716.5h-1V716.5h-1V716.5h-1V719.6h-1V719.6h-1V719.6h-1V716.8h-1V716.8h-1V716.8h-1V723.6h-1V723.6h-1V723.6h-1V722.3h-1V727.2h-1V722.3h-1V719.6h-1V719.6h-1V710.7h-1V718.3h-1V718.3h-1V718.3h-1V717.7h-1V717.7h-1V717.7h-1V718.8h-1V718.8h-1V718.8h-1V719.2h-1V719.2h-1V719.2h-1V718.4h-1V718.4h-1V723.6h-1V717.1h-1V721.8h-1V717.1h-1V718.1h-1V718.1h-1V718.1h-1V723.5h-1V719.3h-1V719.3h-1V718.2h-1V718.2h-1V718.2h-1V715.7h-1V723.3h-1V715.7h-1V716.8h-1V724.2h-1V716.8h-1V722.8h-1V713.4h-1V718.3h-1V716.3h-1V716.3h-1V709.0h-1V722.5h-1V709.1h-1V715.7h-1V717.6h-1V712.3h-1V717.6h-1V722.0h-1V719.1h-1V719.1h-1V718.2h-1V718.2h-1V718.2h-1V712.7h-1V718.7h-1V718.7h-1V716.3h-1V716.3h-1V716.3h-1V720.0h-1V720.0h-1V720.0h-1V717.1h-1V717.1h-1V717.1h-1V717.1h-1V717.1h-1V717.1h-1V717.7h-1V717.7h-1V717.7h-1V715.6h-1V715.6h-1V715.6h-1V716.9h-1V716.9h-1V716.9h-1V711.7h-1V711.7h-1V711.7h-1V713.4h-1V713.4h-1V713.4h-1V712.1h-1V712.1h-1V712.1h-1V710.9h-1V710.9h-1V710.9h-1V714.7h-1V714.7h-1V714.7h-1V711.8h-1V717.0h-1V711.8h-1V712.5h-1V712.5h-1V712.5h-1V712.5h-1V712.5h-1V712.5h-1V713.9h-1V718.9h-1V717.2h-1V711.1h-1V711.1h-1V711.1h-1V712.3h-1V717.5h-1V719.2h-1V712.3h-1V712.3h-1V708.5h-1V714.8h-1V714.8h-1V705.8h-1V718.2h-1V705.9h-1V711.9h-1V714.5h-1V714.5h-1V714.5h-1V714.2h-1V716.9h-1V719.3h-1V712.8h-1V718.5h-1V712.8h-1V714.5h-1V714.5h-1V714.5h-1V709.3h-1V710.6h-1V716.2h-1V710.6h-1V710.6h-1V710.6h-1V713.6h-1V718.5h-1V719.4h-1V714.1h-1V714.1h-1V714.1h-1V710.5h-1V710.5h-1V710.5h-1V711.2h-1V711.2h-1V715.8h-1V714.7h-1V714.7h-1V714.7h-1V712.8h-1V710.2h-1V712.8h-1V714.8h-1V714.8h-1V714.8h-1V706.6h-1V713.2h-1V715.5h-1V696.5h-1V696.5h-1V696.5h-1V696.5h-1V696.5h-1V696.5h-1V696.5h-1V696.5h-1V696.5h-1V696.5h-1V696.5h-1V696.5h-1V696.5h-1V696.5h-1V696.5h-1V696.5h-1V696.5h-1V696.5h-1Z" fill="#f5deb3"/>
<rect x="609.20" y="662.30" width="2.20" height="66.50" fill="#e00000"/>
<text x="617" y="629.4" font-size="27" fill="#fff" stroke="#fff" stroke-width="3" filter="url(#glow)" textLength="296.6" lengthAdjust="spacingAndGlyphs">1000 mal berührt (Midi)</text>
<text x="617.0" y="629.4" font-size="27" fill="#000" textLength="296.6" lengthAdjust="spacingAndGlyphs">1000 mal berührt (Midi)</text>
<text x="617" y="702" font-size="27" fill="#fff" stroke="#fff" stroke-width="3" filter="url(#glow)" textLength="217.3" lengthAdjust="spacingAndGlyphs">1000 mal berührt</text>
<text x="617.0" y="702.0" font-size="27" fill="#000" textLength="217.3" lengthAdjust="spacingAndGlyphs">1000 mal berührt</text>
<rect x="1678.80" y="592.20" width="127.80" height="61.10" fill="#404040" rx="11" stroke="#0a0a0a" stroke-width="1.6"/>
<text x="1724.3" y="632.1" font-size="22.5" fill="#fff" textLength="37.3" lengthAdjust="spacingAndGlyphs">Edit</text>
<circle cx="1855.30" cy="622.90" r="24.70" fill="url(#gball)"/>
<path d="M1832.16,631.54 A24.7,24.7 0 1 1 1879.08,616.23 Q1862.71,625.37 1832.16,631.54 Z" fill="url(#gtop)"/>
<circle cx="1855.30" cy="622.90" r="24.40" fill="none" stroke="#a8a8b8" stroke-width="0.7"/>
<path d="M1846,611.9 L1869.5,622.9 L1846,633.9 Z" fill="#454343"/>
<rect x="1678.80" y="665.10" width="127.80" height="60.80" fill="#404040" rx="11" stroke="#0a0a0a" stroke-width="1.6"/>
<text x="1724.3" y="704.8" font-size="22.5" fill="#fff" textLength="37.3" lengthAdjust="spacingAndGlyphs">Edit</text>
<circle cx="1855.30" cy="695.60" r="24.70" fill="url(#gball)"/>
<path d="M1832.16,704.25 A24.7,24.7 0 1 1 1879.08,688.93 Q1862.71,698.07 1832.16,704.25 Z" fill="url(#gtop)"/>
<circle cx="1855.30" cy="695.60" r="24.40" fill="none" stroke="#a8a8b8" stroke-width="0.7"/>
<path d="M1846,684.6 L1869.5,695.6 L1846,706.6 Z" fill="#454343"/>
<text x="376.9" y="802.0" font-size="25" fill="#fff" textLength="92.3" lengthAdjust="spacingAndGlyphs">Volume:</text>
<text x="377.0" y="918.4" font-size="25" fill="#fff" textLength="109.8" lengthAdjust="spacingAndGlyphs">Equalizer:</text>
<rect x="536.50" y="768.20" width="1133.50" height="101.40" fill="#3a3a3a"/>
<rect x="536.50" y="877.00" width="1133.50" height="464.80" fill="#3a3a3a"/>
<line x1="567.5" y1="819" x2="1638" y2="819" stroke="#000" stroke-width="5.4" stroke-linecap="round"/>
<line x1="565.2" y1="822.2" x2="565.2" y2="833.9" stroke="#e8d2a8" stroke-width="1.6"/>
<line x1="579.3" y1="822.2" x2="579.3" y2="828.7" stroke="#a0a0a0" stroke-width="1.6"/>
<line x1="593.5" y1="822.2" x2="593.5" y2="828.7" stroke="#a0a0a0" stroke-width="1.6"/>
<line x1="607.6" y1="822.2" x2="607.6" y2="828.7" stroke="#a0a0a0" stroke-width="1.6"/>
<line x1="621.7" y1="822.2" x2="621.7" y2="828.7" stroke="#a0a0a0" stroke-width="1.6"/>
<line x1="635.8" y1="822.2" x2="635.8" y2="828.7" stroke="#a0a0a0" stroke-width="1.6"/>
<line x1="650.0" y1="822.2" x2="650.0" y2="833.9" stroke="#e8d2a8" stroke-width="1.6"/>
<line x1="664.1" y1="822.2" x2="664.1" y2="828.7" stroke="#a0a0a0" stroke-width="1.6"/>
<line x1="678.2" y1="822.2" x2="678.2" y2="828.7" stroke="#a0a0a0" stroke-width="1.6"/>
<line x1="692.3" y1="822.2" x2="692.3" y2="828.7" stroke="#a0a0a0" stroke-width="1.6"/>
<line x1="706.5" y1="822.2" x2="706.5" y2="828.7" stroke="#a0a0a0" stroke-width="1.6"/>
<line x1="720.6" y1="822.2" x2="720.6" y2="828.7" stroke="#a0a0a0" stroke-width="1.6"/>
<line x1="734.7" y1="822.2" x2="734.7" y2="833.9" stroke="#e8d2a8" stroke-width="1.6"/>
<line x1="748.8" y1="822.2" x2="748.8" y2="828.7" stroke="#a0a0a0" stroke-width="1.6"/>
<line x1="763.0" y1="822.2" x2="763.0" y2="828.7" stroke="#a0a0a0" stroke-width="1.6"/>
<line x1="777.1" y1="822.2" x2="777.1" y2="828.7" stroke="#a0a0a0" stroke-width="1.6"/>
<line x1="791.2" y1="822.2" x2="791.2" y2="828.7" stroke="#a0a0a0" stroke-width="1.6"/>
<line x1="805.3" y1="822.2" x2="805.3" y2="828.7" stroke="#a0a0a0" stroke-width="1.6"/>
<line x1="819.5" y1="822.2" x2="819.5" y2="833.9" stroke="#e8d2a8" stroke-width="1.6"/>
<line x1="833.6" y1="822.2" x2="833.6" y2="828.7" stroke="#a0a0a0" stroke-width="1.6"/>
<line x1="847.7" y1="822.2" x2="847.7" y2="828.7" stroke="#a0a0a0" stroke-width="1.6"/>
<line x1="861.8" y1="822.2" x2="861.8" y2="828.7" stroke="#a0a0a0" stroke-width="1.6"/>
<line x1="876.0" y1="822.2" x2="876.0" y2="828.7" stroke="#a0a0a0" stroke-width="1.6"/>
<line x1="890.1" y1="822.2" x2="890.1" y2="828.7" stroke="#a0a0a0" stroke-width="1.6"/>
<line x1="904.2" y1="822.2" x2="904.2" y2="833.9" stroke="#e8d2a8" stroke-width="1.6"/>
<line x1="918.3" y1="822.2" x2="918.3" y2="828.7" stroke="#a0a0a0" stroke-width="1.6"/>
<line x1="932.5" y1="822.2" x2="932.5" y2="828.7" stroke="#a0a0a0" stroke-width="1.6"/>
<line x1="946.6" y1="822.2" x2="946.6" y2="828.7" stroke="#a0a0a0" stroke-width="1.6"/>
<line x1="960.7" y1="822.2" x2="960.7" y2="828.7" stroke="#a0a0a0" stroke-width="1.6"/>
<line x1="974.8" y1="822.2" x2="974.8" y2="828.7" stroke="#a0a0a0" stroke-width="1.6"/>
<line x1="989.0" y1="822.2" x2="989.0" y2="833.9" stroke="#e8d2a8" stroke-width="1.6"/>
<line x1="1003.1" y1="822.2" x2="1003.1" y2="828.7" stroke="#a0a0a0" stroke-width="1.6"/>
<line x1="1017.2" y1="822.2" x2="1017.2" y2="828.7" stroke="#a0a0a0" stroke-width="1.6"/>
<line x1="1031.3" y1="822.2" x2="1031.3" y2="828.7" stroke="#a0a0a0" stroke-width="1.6"/>
<line x1="1045.5" y1="822.2" x2="1045.5" y2="828.7" stroke="#a0a0a0" stroke-width="1.6"/>
<line x1="1059.6" y1="822.2" x2="1059.6" y2="828.7" stroke="#a0a0a0" stroke-width="1.6"/>
<line x1="1073.7" y1="822.2" x2="1073.7" y2="833.9" stroke="#e8d2a8" stroke-width="1.6"/>
<line x1="1087.8" y1="822.2" x2="1087.8" y2="828.7" stroke="#a0a0a0" stroke-width="1.6"/>
<line x1="1102.0" y1="822.2" x2="1102.0" y2="828.7" stroke="#a0a0a0" stroke-width="1.6"/>
<line x1="1116.1" y1="822.2" x2="1116.1" y2="828.7" stroke="#a0a0a0" stroke-width="1.6"/>
<line x1="1130.2" y1="822.2" x2="1130.2" y2="828.7" stroke="#a0a0a0" stroke-width="1.6"/>
<line x1="1144.3" y1="822.2" x2="1144.3" y2="828.7" stroke="#a0a0a0" stroke-width="1.6"/>
<line x1="1158.5" y1="822.2" x2="1158.5" y2="833.9" stroke="#e8d2a8" stroke-width="1.6"/>
<line x1="1172.6" y1="822.2" x2="1172.6" y2="828.7" stroke="#a0a0a0" stroke-width="1.6"/>
<line x1="1186.7" y1="822.2" x2="1186.7" y2="828.7" stroke="#a0a0a0" stroke-width="1.6"/>
<line x1="1200.8" y1="822.2" x2="1200.8" y2="828.7" stroke="#a0a0a0" stroke-width="1.6"/>
<line x1="1215.0" y1="822.2" x2="1215.0" y2="828.7" stroke="#a0a0a0" stroke-width="1.6"/>
<line x1="1229.1" y1="822.2" x2="1229.1" y2="828.7" stroke="#a0a0a0" stroke-width="1.6"/>
<line x1="1243.2" y1="822.2" x2="1243.2" y2="833.9" stroke="#e8d2a8" stroke-width="1.6"/>
<line x1="1257.3" y1="822.2" x2="1257.3" y2="828.7" stroke="#a0a0a0" stroke-width="1.6"/>
<line x1="1271.5" y1="822.2" x2="1271.5" y2="828.7" stroke="#a0a0a0" stroke-width="1.6"/>
<line x1="1285.6" y1="822.2" x2="1285.6" y2="828.7" stroke="#a0a0a0" stroke-width="1.6"/>
<line x1="1299.7" y1="822.2" x2="1299.7" y2="828.7" stroke="#a0a0a0" stroke-width="1.6"/>
<line x1="1313.8" y1="822.2" x2="1313.8" y2="828.7" stroke="#a0a0a0" stroke-width="1.6"/>
<line x1="1328.0" y1="822.2" x2="1328.0" y2="833.9" stroke="#e8d2a8" stroke-width="1.6"/>
<line x1="1342.1" y1="822.2" x2="1342.1" y2="828.7" stroke="#a0a0a0" stroke-width="1.6"/>
<line x1="1356.2" y1="822.2" x2="1356.2" y2="828.7" stroke="#a0a0a0" stroke-width="1.6"/>
<line x1="1370.3" y1="822.2" x2="1370.3" y2="828.7" stroke="#a0a0a0" stroke-width="1.6"/>
<line x1="1384.5" y1="822.2" x2="1384.5" y2="828.7" stroke="#a0a0a0" stroke-width="1.6"/>
<line x1="1398.6" y1="822.2" x2="1398.6" y2="828.7" stroke="#a0a0a0" stroke-width="1.6"/>
<line x1="1412.7" y1="822.2" x2="1412.7" y2="833.9" stroke="#a0a0a0" stroke-width="1.6"/>
<line x1="1426.8" y1="822.2" x2="1426.8" y2="828.7" stroke="#a0a0a0" stroke-width="1.6"/>
<line x1="1441.0" y1="822.2" x2="1441.0" y2="828.7" stroke="#a0a0a0" stroke-width="1.6"/>
<line x1="1455.1" y1="822.2" x2="1455.1" y2="828.7" stroke="#a0a0a0" stroke-width="1.6"/>
<line x1="1469.2" y1="822.2" x2="1469.2" y2="828.7" stroke="#a0a0a0" stroke-width="1.6"/>
<line x1="1483.3" y1="822.2" x2="1483.3" y2="828.7" stroke="#a0a0a0" stroke-width="1.6"/>
<line x1="1497.5" y1="822.2" x2="1497.5" y2="833.9" stroke="#a0a0a0" stroke-width="1.6"/>
<line x1="1511.6" y1="822.2" x2="1511.6" y2="828.7" stroke="#a0a0a0" stroke-width="1.6"/>
<line x1="1525.7" y1="822.2" x2="1525.7" y2="828.7" stroke="#a0a0a0" stroke-width="1.6"/>
<line x1="1539.8" y1="822.2" x2="1539.8" y2="828.7" stroke="#a0a0a0" stroke-width="1.6"/>
<line x1="1554.0" y1="822.2" x2="1554.0" y2="828.7" stroke="#a0a0a0" stroke-width="1.6"/>
<line x1="1568.1" y1="822.2" x2="1568.1" y2="828.7" stroke="#a0a0a0" stroke-width="1.6"/>
<line x1="1582.2" y1="822.2" x2="1582.2" y2="833.9" stroke="#a0a0a0" stroke-width="1.6"/>
<line x1="1596.3" y1="822.2" x2="1596.3" y2="828.7" stroke="#a0a0a0" stroke-width="1.6"/>
<line x1="1610.5" y1="822.2" x2="1610.5" y2="828.7" stroke="#a0a0a0" stroke-width="1.6"/>
<line x1="1624.6" y1="822.2" x2="1624.6" y2="828.7" stroke="#a0a0a0" stroke-width="1.6"/>
<line x1="1638.7" y1="822.2" x2="1638.7" y2="828.7" stroke="#a0a0a0" stroke-width="1.6"/>
<circle cx="1336.00" cy="819.00" r="22.00" fill="#f5deb3"/>
<text x="1684.8" y="835.3" font-size="24" fill="#fff" textLength="126.0" lengthAdjust="spacingAndGlyphs">Volume: 91</text>
<line x1="794" y1="942.6" x2="1558" y2="942.6" stroke="#3d7ead" stroke-width="4"/>
<line x1="794" y1="1032.2" x2="1558" y2="1032.2" stroke="#3d7ead" stroke-width="4"/>
<line x1="794" y1="1124.5" x2="1558" y2="1124.5" stroke="#3d7ead" stroke-width="4"/>
<line x1="794" y1="1214" x2="1558" y2="1214" stroke="#3d7ead" stroke-width="4"/>
<line x1="794" y1="1306" x2="1558" y2="1306" stroke="#3d7ead" stroke-width="4"/>
<line x1="783.5" y1="946" x2="783.5" y2="1302" stroke="#000" stroke-width="21.6" stroke-linecap="round"/>
<line x1="870.6" y1="946" x2="870.6" y2="1302" stroke="#000" stroke-width="21.6" stroke-linecap="round"/>
<line x1="957.8" y1="946" x2="957.8" y2="1302" stroke="#000" stroke-width="21.6" stroke-linecap="round"/>
<line x1="1045" y1="946" x2="1045" y2="1302" stroke="#000" stroke-width="21.6" stroke-linecap="round"/>
<line x1="1132.2" y1="946" x2="1132.2" y2="1302" stroke="#000" stroke-width="21.6" stroke-linecap="round"/>
<line x1="1219.3" y1="946" x2="1219.3" y2="1302" stroke="#000" stroke-width="21.6" stroke-linecap="round"/>
<line x1="1306.6" y1="946" x2="1306.6" y2="1302" stroke="#000" stroke-width="21.6" stroke-linecap="round"/>
<line x1="1393.7" y1="946" x2="1393.7" y2="1302" stroke="#000" stroke-width="21.6" stroke-linecap="round"/>
<line x1="1480.9" y1="946" x2="1480.9" y2="1302" stroke="#000" stroke-width="21.6" stroke-linecap="round"/>
<line x1="1568.2" y1="946" x2="1568.2" y2="1302" stroke="#000" stroke-width="21.6" stroke-linecap="round"/>
<text x="771.4" y="900.2" font-size="20.5" fill="#fff" textLength="21.3" lengthAdjust="spacingAndGlyphs">31</text>
<text x="858.4" y="900.2" font-size="20.5" fill="#fff" textLength="23.1" lengthAdjust="spacingAndGlyphs">63</text>
<text x="939.6" y="900.2" font-size="20.5" fill="#fff" textLength="36.3" lengthAdjust="spacingAndGlyphs">125</text>
<text x="1026.2" y="900.2" font-size="20.5" fill="#fff" textLength="36.3" lengthAdjust="spacingAndGlyphs">250</text>
<text x="1113.4" y="900.2" font-size="20.5" fill="#fff" textLength="36.8" lengthAdjust="spacingAndGlyphs">500</text>
<text x="1198.7" y="900.2" font-size="20.5" fill="#fff" textLength="42.5" lengthAdjust="spacingAndGlyphs">1.0K</text>
<text x="1285.2" y="900.2" font-size="20.5" fill="#fff" textLength="42.7" lengthAdjust="spacingAndGlyphs">2.0K</text>
<text x="1371.4" y="900.2" font-size="20.5" fill="#fff" textLength="44.0" lengthAdjust="spacingAndGlyphs">4.0K</text>
<text x="1459.4" y="900.2" font-size="20.5" fill="#fff" textLength="42.9" lengthAdjust="spacingAndGlyphs">8.0K</text>
<text x="1540.8" y="900.2" font-size="20.5" fill="#fff" textLength="55.0" lengthAdjust="spacingAndGlyphs">16.0K</text>
<text x="703.0" y="951.0" font-size="20.5" fill="#fff" textLength="36.0" lengthAdjust="spacingAndGlyphs">+15</text>
<text x="727.7" y="1133.0" font-size="20.5" fill="#fff" textLength="10.9" lengthAdjust="spacingAndGlyphs">0</text>
<text x="707.3" y="1316.0" font-size="20.5" fill="#fff" textLength="31.7" lengthAdjust="spacingAndGlyphs">-15</text>
<circle cx="783.50" cy="1008.60" r="14.40" fill="#f5deb3"/>
<circle cx="870.60" cy="1124.50" r="14.40" fill="#f5deb3"/>
<circle cx="957.80" cy="1124.50" r="14.40" fill="#f5deb3"/>
<circle cx="1045.00" cy="1124.50" r="14.40" fill="#f5deb3"/>
<circle cx="1132.20" cy="1124.50" r="14.40" fill="#f5deb3"/>
<circle cx="1219.30" cy="1124.50" r="14.40" fill="#f5deb3"/>
<circle cx="1306.60" cy="1124.50" r="14.40" fill="#f5deb3"/>
<circle cx="1393.70" cy="1124.50" r="14.40" fill="#f5deb3"/>
<circle cx="1480.90" cy="1124.50" r="14.40" fill="#f5deb3"/>
<circle cx="1568.20" cy="1124.50" r="14.40" fill="#f5deb3"/>
<rect x="537.70" y="1033.30" width="113.30" height="61.00" fill="#2f2f2f" rx="11" stroke="#0a0a0a" stroke-width="1.6"/>
<text x="567.4" y="1073.0" font-size="22" fill="#fff" textLength="54.6" lengthAdjust="spacingAndGlyphs">Reset</text>
<rect x="10.80" y="1401.40" width="481.00" height="51.70" fill="#404040" rx="11" stroke="#0a0a0a" stroke-width="1.6"/>
<text x="192.5" y="1439.2" font-size="31.3" fill="#fff" textLength="117.5" lengthAdjust="spacingAndGlyphs">Patterns</text>
<rect x="509.50" y="1401.40" width="481.60" height="51.70" fill="#404040" rx="11" stroke="#0a0a0a" stroke-width="1.6"/>
<text x="709.0" y="1439.2" font-size="31.3" fill="#f0d9b0" textLength="83.5" lengthAdjust="spacingAndGlyphs">Songs</text>
<rect x="1008.90" y="1401.40" width="481.30" height="51.70" fill="#404040" rx="11" stroke="#0a0a0a" stroke-width="1.6"/>
<text x="1201.1" y="1439.2" font-size="31.3" fill="#fff" textLength="96.9" lengthAdjust="spacingAndGlyphs">Setlists</text>
<rect x="1508.00" y="1401.40" width="481.60" height="51.70" fill="#404040" rx="11" stroke="#0a0a0a" stroke-width="1.6"/>
<text x="1693.5" y="1439.2" font-size="31.3" fill="#fff" textLength="110.5" lengthAdjust="spacingAndGlyphs">Settings</text>
<rect x="748.90" y="1480.80" width="502.20" height="8.20" fill="#fff" rx="4.1"/>
<rect x="1998.40" y="124.00" width="1.60" height="1267.00" fill="#262626"/>
<rect x="1998.60" y="1391.00" width="1.40" height="73.00" fill="#000"/>
</svg></body></html>
